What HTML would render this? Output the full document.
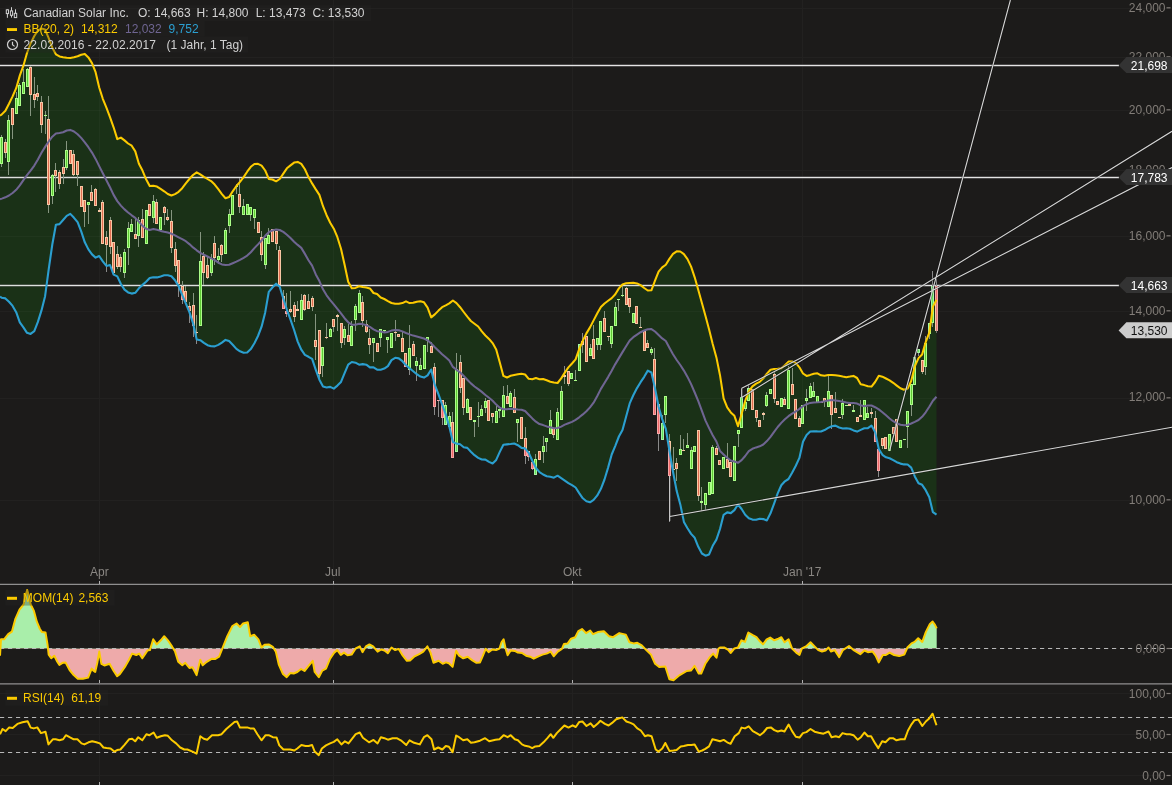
<!DOCTYPE html>
<html lang="de"><head><meta charset="utf-8"><title>Canadian Solar Inc. Chart</title>
<style>html,body{margin:0;padding:0;background:#1c1b1a;overflow:hidden}svg{display:block;will-change:transform}text{opacity:.999}</style></head>
<body>
<svg width="1172" height="785" viewBox="0 0 1172 785" font-family="'Liberation Sans', sans-serif" font-size="12">
<rect width="1172" height="785" fill="#1c1b1a"/>
<path d="M0 500.5H1172M0 398.5H1172M0 311.5H1172M0 236.5H1172M0 170.5H1172M0 110.5H1172M0 57.5H1172M0 8.5H1172M0 693.5H1172M0 734.5H1172M0 775.5H1172M99.5 0V785M333.5 0V785M572.5 0V785M802.5 0V785" stroke="#222120" stroke-width="1" fill="none"/>
<polygon points="0.0,115.7 1.8,114.4 5.4,110.8 9.0,103.8 12.6,96.4 16.2,88.2 19.8,75.6 23.4,65.7 27.0,53.0 30.6,43.5 34.3,36.0 37.9,30.5 41.5,28.6 45.1,29.6 48.7,38.2 52.3,47.7 55.9,54.3 59.5,56.4 63.1,57.2 66.7,57.7 70.3,57.9 74.0,57.3 77.6,56.2 81.2,54.7 84.8,53.9 88.4,57.4 92.0,63.1 95.6,72.2 99.2,87.5 102.8,98.8 106.4,107.7 110.0,117.1 113.6,127.3 117.3,139.1 120.9,137.6 124.5,140.4 128.1,143.5 131.7,145.7 135.3,151.4 138.9,163.8 142.5,170.6 146.1,179.3 149.7,186.1 153.3,185.8 157.0,186.6 160.6,188.9 164.2,191.3 167.8,194.0 171.4,195.5 175.0,194.1 178.6,191.8 182.2,188.2 185.8,183.4 189.4,179.0 193.0,175.0 196.7,172.3 200.3,174.4 203.9,176.8 207.5,179.0 211.1,181.1 214.7,184.6 218.3,189.2 221.9,194.1 225.5,198.2 229.1,197.1 232.7,191.3 236.4,186.0 240.0,181.9 243.6,177.1 247.2,171.7 250.8,166.8 254.4,164.0 258.0,163.8 261.6,165.6 265.2,170.5 268.8,178.9 272.4,179.5 276.1,181.3 279.7,179.0 283.3,173.6 286.9,168.3 290.5,165.4 294.1,162.6 297.7,161.9 301.3,163.9 304.9,169.3 308.5,177.1 312.1,183.4 315.8,189.4 319.4,194.9 323.0,206.2 326.6,215.2 330.2,222.8 333.8,228.7 337.4,237.2 341.0,248.7 344.6,264.8 348.2,281.7 351.8,288.2 355.5,287.9 359.1,286.3 362.7,287.1 366.3,287.5 369.9,288.4 373.5,293.0 377.1,294.1 380.7,297.5 384.3,299.0 387.9,301.1 391.5,303.0 395.2,303.7 398.8,303.7 402.4,303.1 406.0,301.3 409.6,303.1 413.2,302.8 416.8,301.7 420.4,301.3 424.0,302.3 427.6,307.6 431.2,317.4 434.8,314.4 438.5,310.6 442.1,307.2 445.7,305.4 449.3,303.4 452.9,300.5 456.5,303.1 460.1,307.2 463.7,312.0 467.3,316.7 470.9,321.0 474.5,323.7 478.2,326.5 481.8,331.4 485.4,335.5 489.0,338.9 492.6,343.1 496.2,349.4 499.8,362.5 503.4,375.9 507.0,377.5 510.6,375.8 514.2,375.1 517.9,374.3 521.5,373.7 525.1,374.5 528.7,378.8 532.3,379.2 535.9,378.1 539.5,379.2 543.1,379.0 546.7,380.3 550.3,381.7 553.9,382.5 557.6,383.0 561.2,378.4 564.8,372.6 568.4,367.4 572.0,363.5 575.6,359.4 579.2,349.2 582.8,340.6 586.4,333.4 590.0,327.4 593.6,320.4 597.3,313.3 600.9,307.0 604.5,303.5 608.1,300.8 611.7,298.1 615.3,294.3 618.9,288.4 622.5,284.5 626.1,283.3 629.7,282.9 633.3,282.7 637.0,283.4 640.6,285.1 644.2,288.0 647.8,290.5 651.4,290.3 655.0,280.7 658.6,271.7 662.2,267.4 665.8,264.7 669.4,258.9 673.0,253.9 676.7,251.3 680.3,251.5 683.9,254.1 687.5,259.1 691.1,266.6 694.7,277.3 698.3,290.0 701.9,303.1 705.5,316.0 709.1,329.4 712.7,344.0 716.4,357.4 720.0,375.2 723.6,398.4 727.2,407.4 730.8,412.4 734.4,415.8 738.0,426.2 741.6,414.1 745.2,400.9 748.8,391.4 752.4,386.3 756.1,383.7 759.7,381.9 763.3,378.3 766.9,373.7 770.5,369.8 774.1,369.1 777.7,368.8 781.3,368.2 784.9,365.2 788.5,361.6 792.1,361.4 795.8,362.9 799.4,367.3 803.0,373.5 806.6,375.9 810.2,374.9 813.8,373.7 817.4,373.3 821.0,375.3 824.6,375.8 828.2,375.1 831.8,375.0 835.4,375.2 839.1,375.7 842.7,376.5 846.3,377.2 849.9,376.6 853.5,375.9 857.1,378.0 860.7,384.2 864.3,385.1 867.9,386.3 871.5,386.6 875.1,382.0 878.8,375.8 882.4,376.7 886.0,378.5 889.6,380.3 893.2,382.8 896.8,385.6 900.4,388.3 904.0,389.8 907.6,388.5 911.2,381.0 914.8,366.4 918.5,358.1 922.1,354.5 925.7,342.1 929.3,332.6 932.9,306.6 936.5,299.7 936.5,514.6 932.9,512.2 929.3,497.2 925.7,490.2 922.1,484.8 918.5,483.2 914.8,476.4 911.2,467.6 907.6,464.5 904.0,464.4 900.4,463.6 896.8,462.2 893.2,460.1 889.6,458.2 886.0,457.3 882.4,454.8 878.8,449.0 875.1,431.9 871.5,425.6 867.9,428.2 864.3,428.3 860.7,429.9 857.1,431.6 853.5,430.4 849.9,428.7 846.3,428.3 842.7,428.5 839.1,427.5 835.4,425.6 831.8,426.2 828.2,427.9 824.6,430.1 821.0,431.5 817.4,431.4 813.8,431.2 810.2,431.5 806.6,434.9 803.0,441.8 799.4,457.9 795.8,465.7 792.1,472.8 788.5,479.0 784.9,481.3 781.3,485.3 777.7,493.4 774.1,503.6 770.5,513.3 766.9,520.4 763.3,519.1 759.7,518.8 756.1,519.8 752.4,519.6 748.8,518.3 745.2,514.7 741.6,509.0 738.0,504.5 734.4,510.1 730.8,513.1 727.2,512.4 723.6,514.8 720.0,529.0 716.4,539.6 712.7,545.8 709.1,554.4 705.5,555.7 701.9,553.5 698.3,546.8 694.7,537.8 691.1,533.9 687.5,528.3 683.9,521.9 680.3,504.4 676.7,491.1 673.0,471.7 669.4,450.5 665.8,428.9 662.2,419.1 658.6,406.7 655.0,388.3 651.4,372.5 647.8,370.6 644.2,376.8 640.6,382.2 637.0,388.1 633.3,395.3 629.7,403.4 626.1,416.7 622.5,430.0 618.9,436.5 615.3,445.8 611.7,454.5 608.1,467.6 604.5,479.5 600.9,488.8 597.3,495.4 593.6,499.9 590.0,502.3 586.4,501.3 582.8,498.3 579.2,493.1 575.6,487.5 572.0,485.1 568.4,483.1 564.8,480.6 561.2,478.1 557.6,475.7 553.9,477.7 550.3,476.8 546.7,476.3 543.1,474.5 539.5,472.1 535.9,467.8 532.3,460.7 528.7,452.8 525.1,448.4 521.5,447.9 517.9,445.2 514.2,443.5 510.6,444.0 507.0,444.4 503.4,444.8 499.8,451.9 496.2,459.9 492.6,463.5 489.0,461.9 485.4,459.6 481.8,459.5 478.2,457.9 474.5,455.2 470.9,451.7 467.3,447.9 463.7,447.2 460.1,444.3 456.5,443.6 452.9,442.0 449.3,426.6 445.7,414.3 442.1,404.3 438.5,394.3 434.8,384.9 431.2,369.5 427.6,375.4 424.0,377.6 420.4,376.6 416.8,374.2 413.2,371.3 409.6,368.3 406.0,365.2 402.4,361.2 398.8,358.4 395.2,357.8 391.5,360.1 387.9,366.1 384.3,368.6 380.7,369.7 377.1,369.6 373.5,367.3 369.9,367.4 366.3,364.7 362.7,364.1 359.1,364.7 355.5,362.7 351.8,362.0 348.2,364.6 344.6,373.1 341.0,381.9 337.4,385.6 333.8,388.6 330.2,386.9 326.6,387.5 323.0,386.5 319.4,379.7 315.8,369.8 312.1,358.9 308.5,356.8 304.9,354.9 301.3,349.7 297.7,341.6 294.1,330.0 290.5,319.6 286.9,309.8 283.3,298.5 279.7,286.7 276.1,283.7 272.4,287.5 268.8,291.8 265.2,312.4 261.6,326.7 258.0,336.0 254.4,343.3 250.8,349.1 247.2,352.5 243.6,352.7 240.0,351.3 236.4,348.9 232.7,344.8 229.1,341.1 225.5,339.9 221.9,342.6 218.3,344.9 214.7,346.4 211.1,346.3 207.5,345.2 203.9,342.8 200.3,340.2 196.7,339.4 193.0,323.1 189.4,312.1 185.8,303.4 182.2,294.9 178.6,286.1 175.0,280.3 171.4,276.2 167.8,275.2 164.2,275.3 160.6,276.4 157.0,277.4 153.3,277.2 149.7,278.0 146.1,281.8 142.5,284.9 138.9,288.3 135.3,292.8 131.7,293.6 128.1,292.4 124.5,289.6 120.9,284.0 117.3,276.4 113.6,274.6 110.0,265.0 106.4,265.9 102.8,261.3 99.2,256.0 95.6,257.6 92.0,254.4 88.4,249.4 84.8,242.3 81.2,231.3 77.6,222.2 74.0,217.8 70.3,213.9 66.7,215.9 63.1,220.0 59.5,224.1 55.9,224.7 52.3,244.5 48.7,269.4 45.1,296.2 41.5,310.4 37.9,321.9 34.3,331.2 30.6,333.9 27.0,332.8 23.4,327.3 19.8,322.3 16.2,312.2 12.6,305.9 9.0,301.8 5.4,298.4 1.8,297.8 0.0,296.5" fill="#1a3117"/>
<path d="M0 500.5H1172M0 398.5H1172M0 311.5H1172M0 236.5H1172M0 170.5H1172M0 110.5H1172M0 57.5H1172M0 8.5H1172M0 693.5H1172M0 734.5H1172M0 775.5H1172M99.5 0V785M333.5 0V785M572.5 0V785M802.5 0V785" stroke="#fff" stroke-opacity=".028" stroke-width="1" fill="none" clip-path="url(#inb)"/>
<clipPath id="inb"><polygon points="0.0,115.7 1.8,114.4 5.4,110.8 9.0,103.8 12.6,96.4 16.2,88.2 19.8,75.6 23.4,65.7 27.0,53.0 30.6,43.5 34.3,36.0 37.9,30.5 41.5,28.6 45.1,29.6 48.7,38.2 52.3,47.7 55.9,54.3 59.5,56.4 63.1,57.2 66.7,57.7 70.3,57.9 74.0,57.3 77.6,56.2 81.2,54.7 84.8,53.9 88.4,57.4 92.0,63.1 95.6,72.2 99.2,87.5 102.8,98.8 106.4,107.7 110.0,117.1 113.6,127.3 117.3,139.1 120.9,137.6 124.5,140.4 128.1,143.5 131.7,145.7 135.3,151.4 138.9,163.8 142.5,170.6 146.1,179.3 149.7,186.1 153.3,185.8 157.0,186.6 160.6,188.9 164.2,191.3 167.8,194.0 171.4,195.5 175.0,194.1 178.6,191.8 182.2,188.2 185.8,183.4 189.4,179.0 193.0,175.0 196.7,172.3 200.3,174.4 203.9,176.8 207.5,179.0 211.1,181.1 214.7,184.6 218.3,189.2 221.9,194.1 225.5,198.2 229.1,197.1 232.7,191.3 236.4,186.0 240.0,181.9 243.6,177.1 247.2,171.7 250.8,166.8 254.4,164.0 258.0,163.8 261.6,165.6 265.2,170.5 268.8,178.9 272.4,179.5 276.1,181.3 279.7,179.0 283.3,173.6 286.9,168.3 290.5,165.4 294.1,162.6 297.7,161.9 301.3,163.9 304.9,169.3 308.5,177.1 312.1,183.4 315.8,189.4 319.4,194.9 323.0,206.2 326.6,215.2 330.2,222.8 333.8,228.7 337.4,237.2 341.0,248.7 344.6,264.8 348.2,281.7 351.8,288.2 355.5,287.9 359.1,286.3 362.7,287.1 366.3,287.5 369.9,288.4 373.5,293.0 377.1,294.1 380.7,297.5 384.3,299.0 387.9,301.1 391.5,303.0 395.2,303.7 398.8,303.7 402.4,303.1 406.0,301.3 409.6,303.1 413.2,302.8 416.8,301.7 420.4,301.3 424.0,302.3 427.6,307.6 431.2,317.4 434.8,314.4 438.5,310.6 442.1,307.2 445.7,305.4 449.3,303.4 452.9,300.5 456.5,303.1 460.1,307.2 463.7,312.0 467.3,316.7 470.9,321.0 474.5,323.7 478.2,326.5 481.8,331.4 485.4,335.5 489.0,338.9 492.6,343.1 496.2,349.4 499.8,362.5 503.4,375.9 507.0,377.5 510.6,375.8 514.2,375.1 517.9,374.3 521.5,373.7 525.1,374.5 528.7,378.8 532.3,379.2 535.9,378.1 539.5,379.2 543.1,379.0 546.7,380.3 550.3,381.7 553.9,382.5 557.6,383.0 561.2,378.4 564.8,372.6 568.4,367.4 572.0,363.5 575.6,359.4 579.2,349.2 582.8,340.6 586.4,333.4 590.0,327.4 593.6,320.4 597.3,313.3 600.9,307.0 604.5,303.5 608.1,300.8 611.7,298.1 615.3,294.3 618.9,288.4 622.5,284.5 626.1,283.3 629.7,282.9 633.3,282.7 637.0,283.4 640.6,285.1 644.2,288.0 647.8,290.5 651.4,290.3 655.0,280.7 658.6,271.7 662.2,267.4 665.8,264.7 669.4,258.9 673.0,253.9 676.7,251.3 680.3,251.5 683.9,254.1 687.5,259.1 691.1,266.6 694.7,277.3 698.3,290.0 701.9,303.1 705.5,316.0 709.1,329.4 712.7,344.0 716.4,357.4 720.0,375.2 723.6,398.4 727.2,407.4 730.8,412.4 734.4,415.8 738.0,426.2 741.6,414.1 745.2,400.9 748.8,391.4 752.4,386.3 756.1,383.7 759.7,381.9 763.3,378.3 766.9,373.7 770.5,369.8 774.1,369.1 777.7,368.8 781.3,368.2 784.9,365.2 788.5,361.6 792.1,361.4 795.8,362.9 799.4,367.3 803.0,373.5 806.6,375.9 810.2,374.9 813.8,373.7 817.4,373.3 821.0,375.3 824.6,375.8 828.2,375.1 831.8,375.0 835.4,375.2 839.1,375.7 842.7,376.5 846.3,377.2 849.9,376.6 853.5,375.9 857.1,378.0 860.7,384.2 864.3,385.1 867.9,386.3 871.5,386.6 875.1,382.0 878.8,375.8 882.4,376.7 886.0,378.5 889.6,380.3 893.2,382.8 896.8,385.6 900.4,388.3 904.0,389.8 907.6,388.5 911.2,381.0 914.8,366.4 918.5,358.1 922.1,354.5 925.7,342.1 929.3,332.6 932.9,306.6 936.5,299.7 936.5,514.6 932.9,512.2 929.3,497.2 925.7,490.2 922.1,484.8 918.5,483.2 914.8,476.4 911.2,467.6 907.6,464.5 904.0,464.4 900.4,463.6 896.8,462.2 893.2,460.1 889.6,458.2 886.0,457.3 882.4,454.8 878.8,449.0 875.1,431.9 871.5,425.6 867.9,428.2 864.3,428.3 860.7,429.9 857.1,431.6 853.5,430.4 849.9,428.7 846.3,428.3 842.7,428.5 839.1,427.5 835.4,425.6 831.8,426.2 828.2,427.9 824.6,430.1 821.0,431.5 817.4,431.4 813.8,431.2 810.2,431.5 806.6,434.9 803.0,441.8 799.4,457.9 795.8,465.7 792.1,472.8 788.5,479.0 784.9,481.3 781.3,485.3 777.7,493.4 774.1,503.6 770.5,513.3 766.9,520.4 763.3,519.1 759.7,518.8 756.1,519.8 752.4,519.6 748.8,518.3 745.2,514.7 741.6,509.0 738.0,504.5 734.4,510.1 730.8,513.1 727.2,512.4 723.6,514.8 720.0,529.0 716.4,539.6 712.7,545.8 709.1,554.4 705.5,555.7 701.9,553.5 698.3,546.8 694.7,537.8 691.1,533.9 687.5,528.3 683.9,521.9 680.3,504.4 676.7,491.1 673.0,471.7 669.4,450.5 665.8,428.9 662.2,419.1 658.6,406.7 655.0,388.3 651.4,372.5 647.8,370.6 644.2,376.8 640.6,382.2 637.0,388.1 633.3,395.3 629.7,403.4 626.1,416.7 622.5,430.0 618.9,436.5 615.3,445.8 611.7,454.5 608.1,467.6 604.5,479.5 600.9,488.8 597.3,495.4 593.6,499.9 590.0,502.3 586.4,501.3 582.8,498.3 579.2,493.1 575.6,487.5 572.0,485.1 568.4,483.1 564.8,480.6 561.2,478.1 557.6,475.7 553.9,477.7 550.3,476.8 546.7,476.3 543.1,474.5 539.5,472.1 535.9,467.8 532.3,460.7 528.7,452.8 525.1,448.4 521.5,447.9 517.9,445.2 514.2,443.5 510.6,444.0 507.0,444.4 503.4,444.8 499.8,451.9 496.2,459.9 492.6,463.5 489.0,461.9 485.4,459.6 481.8,459.5 478.2,457.9 474.5,455.2 470.9,451.7 467.3,447.9 463.7,447.2 460.1,444.3 456.5,443.6 452.9,442.0 449.3,426.6 445.7,414.3 442.1,404.3 438.5,394.3 434.8,384.9 431.2,369.5 427.6,375.4 424.0,377.6 420.4,376.6 416.8,374.2 413.2,371.3 409.6,368.3 406.0,365.2 402.4,361.2 398.8,358.4 395.2,357.8 391.5,360.1 387.9,366.1 384.3,368.6 380.7,369.7 377.1,369.6 373.5,367.3 369.9,367.4 366.3,364.7 362.7,364.1 359.1,364.7 355.5,362.7 351.8,362.0 348.2,364.6 344.6,373.1 341.0,381.9 337.4,385.6 333.8,388.6 330.2,386.9 326.6,387.5 323.0,386.5 319.4,379.7 315.8,369.8 312.1,358.9 308.5,356.8 304.9,354.9 301.3,349.7 297.7,341.6 294.1,330.0 290.5,319.6 286.9,309.8 283.3,298.5 279.7,286.7 276.1,283.7 272.4,287.5 268.8,291.8 265.2,312.4 261.6,326.7 258.0,336.0 254.4,343.3 250.8,349.1 247.2,352.5 243.6,352.7 240.0,351.3 236.4,348.9 232.7,344.8 229.1,341.1 225.5,339.9 221.9,342.6 218.3,344.9 214.7,346.4 211.1,346.3 207.5,345.2 203.9,342.8 200.3,340.2 196.7,339.4 193.0,323.1 189.4,312.1 185.8,303.4 182.2,294.9 178.6,286.1 175.0,280.3 171.4,276.2 167.8,275.2 164.2,275.3 160.6,276.4 157.0,277.4 153.3,277.2 149.7,278.0 146.1,281.8 142.5,284.9 138.9,288.3 135.3,292.8 131.7,293.6 128.1,292.4 124.5,289.6 120.9,284.0 117.3,276.4 113.6,274.6 110.0,265.0 106.4,265.9 102.8,261.3 99.2,256.0 95.6,257.6 92.0,254.4 88.4,249.4 84.8,242.3 81.2,231.3 77.6,222.2 74.0,217.8 70.3,213.9 66.7,215.9 63.1,220.0 59.5,224.1 55.9,224.7 52.3,244.5 48.7,269.4 45.1,296.2 41.5,310.4 37.9,321.9 34.3,331.2 30.6,333.9 27.0,332.8 23.4,327.3 19.8,322.3 16.2,312.2 12.6,305.9 9.0,301.8 5.4,298.4 1.8,297.8 0.0,296.5"/></clipPath>
<clipPath id="outb"><path clip-rule="evenodd" d="M0 0H1172V584H0Z M0.0 115.7 L1.8 114.4 L5.4 110.8 L9.0 103.8 L12.6 96.4 L16.2 88.2 L19.8 75.6 L23.4 65.7 L27.0 53.0 L30.6 43.5 L34.3 36.0 L37.9 30.5 L41.5 28.6 L45.1 29.6 L48.7 38.2 L52.3 47.7 L55.9 54.3 L59.5 56.4 L63.1 57.2 L66.7 57.7 L70.3 57.9 L74.0 57.3 L77.6 56.2 L81.2 54.7 L84.8 53.9 L88.4 57.4 L92.0 63.1 L95.6 72.2 L99.2 87.5 L102.8 98.8 L106.4 107.7 L110.0 117.1 L113.6 127.3 L117.3 139.1 L120.9 137.6 L124.5 140.4 L128.1 143.5 L131.7 145.7 L135.3 151.4 L138.9 163.8 L142.5 170.6 L146.1 179.3 L149.7 186.1 L153.3 185.8 L157.0 186.6 L160.6 188.9 L164.2 191.3 L167.8 194.0 L171.4 195.5 L175.0 194.1 L178.6 191.8 L182.2 188.2 L185.8 183.4 L189.4 179.0 L193.0 175.0 L196.7 172.3 L200.3 174.4 L203.9 176.8 L207.5 179.0 L211.1 181.1 L214.7 184.6 L218.3 189.2 L221.9 194.1 L225.5 198.2 L229.1 197.1 L232.7 191.3 L236.4 186.0 L240.0 181.9 L243.6 177.1 L247.2 171.7 L250.8 166.8 L254.4 164.0 L258.0 163.8 L261.6 165.6 L265.2 170.5 L268.8 178.9 L272.4 179.5 L276.1 181.3 L279.7 179.0 L283.3 173.6 L286.9 168.3 L290.5 165.4 L294.1 162.6 L297.7 161.9 L301.3 163.9 L304.9 169.3 L308.5 177.1 L312.1 183.4 L315.8 189.4 L319.4 194.9 L323.0 206.2 L326.6 215.2 L330.2 222.8 L333.8 228.7 L337.4 237.2 L341.0 248.7 L344.6 264.8 L348.2 281.7 L351.8 288.2 L355.5 287.9 L359.1 286.3 L362.7 287.1 L366.3 287.5 L369.9 288.4 L373.5 293.0 L377.1 294.1 L380.7 297.5 L384.3 299.0 L387.9 301.1 L391.5 303.0 L395.2 303.7 L398.8 303.7 L402.4 303.1 L406.0 301.3 L409.6 303.1 L413.2 302.8 L416.8 301.7 L420.4 301.3 L424.0 302.3 L427.6 307.6 L431.2 317.4 L434.8 314.4 L438.5 310.6 L442.1 307.2 L445.7 305.4 L449.3 303.4 L452.9 300.5 L456.5 303.1 L460.1 307.2 L463.7 312.0 L467.3 316.7 L470.9 321.0 L474.5 323.7 L478.2 326.5 L481.8 331.4 L485.4 335.5 L489.0 338.9 L492.6 343.1 L496.2 349.4 L499.8 362.5 L503.4 375.9 L507.0 377.5 L510.6 375.8 L514.2 375.1 L517.9 374.3 L521.5 373.7 L525.1 374.5 L528.7 378.8 L532.3 379.2 L535.9 378.1 L539.5 379.2 L543.1 379.0 L546.7 380.3 L550.3 381.7 L553.9 382.5 L557.6 383.0 L561.2 378.4 L564.8 372.6 L568.4 367.4 L572.0 363.5 L575.6 359.4 L579.2 349.2 L582.8 340.6 L586.4 333.4 L590.0 327.4 L593.6 320.4 L597.3 313.3 L600.9 307.0 L604.5 303.5 L608.1 300.8 L611.7 298.1 L615.3 294.3 L618.9 288.4 L622.5 284.5 L626.1 283.3 L629.7 282.9 L633.3 282.7 L637.0 283.4 L640.6 285.1 L644.2 288.0 L647.8 290.5 L651.4 290.3 L655.0 280.7 L658.6 271.7 L662.2 267.4 L665.8 264.7 L669.4 258.9 L673.0 253.9 L676.7 251.3 L680.3 251.5 L683.9 254.1 L687.5 259.1 L691.1 266.6 L694.7 277.3 L698.3 290.0 L701.9 303.1 L705.5 316.0 L709.1 329.4 L712.7 344.0 L716.4 357.4 L720.0 375.2 L723.6 398.4 L727.2 407.4 L730.8 412.4 L734.4 415.8 L738.0 426.2 L741.6 414.1 L745.2 400.9 L748.8 391.4 L752.4 386.3 L756.1 383.7 L759.7 381.9 L763.3 378.3 L766.9 373.7 L770.5 369.8 L774.1 369.1 L777.7 368.8 L781.3 368.2 L784.9 365.2 L788.5 361.6 L792.1 361.4 L795.8 362.9 L799.4 367.3 L803.0 373.5 L806.6 375.9 L810.2 374.9 L813.8 373.7 L817.4 373.3 L821.0 375.3 L824.6 375.8 L828.2 375.1 L831.8 375.0 L835.4 375.2 L839.1 375.7 L842.7 376.5 L846.3 377.2 L849.9 376.6 L853.5 375.9 L857.1 378.0 L860.7 384.2 L864.3 385.1 L867.9 386.3 L871.5 386.6 L875.1 382.0 L878.8 375.8 L882.4 376.7 L886.0 378.5 L889.6 380.3 L893.2 382.8 L896.8 385.6 L900.4 388.3 L904.0 389.8 L907.6 388.5 L911.2 381.0 L914.8 366.4 L918.5 358.1 L922.1 354.5 L925.7 342.1 L929.3 332.6 L932.9 306.6 L936.5 299.7 L936.5 514.6 L932.9 512.2 L929.3 497.2 L925.7 490.2 L922.1 484.8 L918.5 483.2 L914.8 476.4 L911.2 467.6 L907.6 464.5 L904.0 464.4 L900.4 463.6 L896.8 462.2 L893.2 460.1 L889.6 458.2 L886.0 457.3 L882.4 454.8 L878.8 449.0 L875.1 431.9 L871.5 425.6 L867.9 428.2 L864.3 428.3 L860.7 429.9 L857.1 431.6 L853.5 430.4 L849.9 428.7 L846.3 428.3 L842.7 428.5 L839.1 427.5 L835.4 425.6 L831.8 426.2 L828.2 427.9 L824.6 430.1 L821.0 431.5 L817.4 431.4 L813.8 431.2 L810.2 431.5 L806.6 434.9 L803.0 441.8 L799.4 457.9 L795.8 465.7 L792.1 472.8 L788.5 479.0 L784.9 481.3 L781.3 485.3 L777.7 493.4 L774.1 503.6 L770.5 513.3 L766.9 520.4 L763.3 519.1 L759.7 518.8 L756.1 519.8 L752.4 519.6 L748.8 518.3 L745.2 514.7 L741.6 509.0 L738.0 504.5 L734.4 510.1 L730.8 513.1 L727.2 512.4 L723.6 514.8 L720.0 529.0 L716.4 539.6 L712.7 545.8 L709.1 554.4 L705.5 555.7 L701.9 553.5 L698.3 546.8 L694.7 537.8 L691.1 533.9 L687.5 528.3 L683.9 521.9 L680.3 504.4 L676.7 491.1 L673.0 471.7 L669.4 450.5 L665.8 428.9 L662.2 419.1 L658.6 406.7 L655.0 388.3 L651.4 372.5 L647.8 370.6 L644.2 376.8 L640.6 382.2 L637.0 388.1 L633.3 395.3 L629.7 403.4 L626.1 416.7 L622.5 430.0 L618.9 436.5 L615.3 445.8 L611.7 454.5 L608.1 467.6 L604.5 479.5 L600.9 488.8 L597.3 495.4 L593.6 499.9 L590.0 502.3 L586.4 501.3 L582.8 498.3 L579.2 493.1 L575.6 487.5 L572.0 485.1 L568.4 483.1 L564.8 480.6 L561.2 478.1 L557.6 475.7 L553.9 477.7 L550.3 476.8 L546.7 476.3 L543.1 474.5 L539.5 472.1 L535.9 467.8 L532.3 460.7 L528.7 452.8 L525.1 448.4 L521.5 447.9 L517.9 445.2 L514.2 443.5 L510.6 444.0 L507.0 444.4 L503.4 444.8 L499.8 451.9 L496.2 459.9 L492.6 463.5 L489.0 461.9 L485.4 459.6 L481.8 459.5 L478.2 457.9 L474.5 455.2 L470.9 451.7 L467.3 447.9 L463.7 447.2 L460.1 444.3 L456.5 443.6 L452.9 442.0 L449.3 426.6 L445.7 414.3 L442.1 404.3 L438.5 394.3 L434.8 384.9 L431.2 369.5 L427.6 375.4 L424.0 377.6 L420.4 376.6 L416.8 374.2 L413.2 371.3 L409.6 368.3 L406.0 365.2 L402.4 361.2 L398.8 358.4 L395.2 357.8 L391.5 360.1 L387.9 366.1 L384.3 368.6 L380.7 369.7 L377.1 369.6 L373.5 367.3 L369.9 367.4 L366.3 364.7 L362.7 364.1 L359.1 364.7 L355.5 362.7 L351.8 362.0 L348.2 364.6 L344.6 373.1 L341.0 381.9 L337.4 385.6 L333.8 388.6 L330.2 386.9 L326.6 387.5 L323.0 386.5 L319.4 379.7 L315.8 369.8 L312.1 358.9 L308.5 356.8 L304.9 354.9 L301.3 349.7 L297.7 341.6 L294.1 330.0 L290.5 319.6 L286.9 309.8 L283.3 298.5 L279.7 286.7 L276.1 283.7 L272.4 287.5 L268.8 291.8 L265.2 312.4 L261.6 326.7 L258.0 336.0 L254.4 343.3 L250.8 349.1 L247.2 352.5 L243.6 352.7 L240.0 351.3 L236.4 348.9 L232.7 344.8 L229.1 341.1 L225.5 339.9 L221.9 342.6 L218.3 344.9 L214.7 346.4 L211.1 346.3 L207.5 345.2 L203.9 342.8 L200.3 340.2 L196.7 339.4 L193.0 323.1 L189.4 312.1 L185.8 303.4 L182.2 294.9 L178.6 286.1 L175.0 280.3 L171.4 276.2 L167.8 275.2 L164.2 275.3 L160.6 276.4 L157.0 277.4 L153.3 277.2 L149.7 278.0 L146.1 281.8 L142.5 284.9 L138.9 288.3 L135.3 292.8 L131.7 293.6 L128.1 292.4 L124.5 289.6 L120.9 284.0 L117.3 276.4 L113.6 274.6 L110.0 265.0 L106.4 265.9 L102.8 261.3 L99.2 256.0 L95.6 257.6 L92.0 254.4 L88.4 249.4 L84.8 242.3 L81.2 231.3 L77.6 222.2 L74.0 217.8 L70.3 213.9 L66.7 215.9 L63.1 220.0 L59.5 224.1 L55.9 224.7 L52.3 244.5 L48.7 269.4 L45.1 296.2 L41.5 310.4 L37.9 321.9 L34.3 331.2 L30.6 333.9 L27.0 332.8 L23.4 327.3 L19.8 322.3 L16.2 312.2 L12.6 305.9 L9.0 301.8 L5.4 298.4 L1.8 297.8 L0.0 296.5 Z"/></clipPath>
<path d="M0 65.5H1119M0 177.5H1119M0 285.5H1119" stroke="#0c0c0c" stroke-opacity=".35" stroke-width="2.8"/>
<path d="M0 65.5H1119M0 177.5H1119M0 285.5H1119" stroke="#e4e4e4" stroke-width="1.35" clip-path="url(#outb)"/>
<path d="M0 65.5H1119M0 177.5H1119M0 285.5H1119" stroke="#dce0dc" stroke-width="1.35" clip-path="url(#inb)"/>
<g clip-path="url(#inb)">
<path d="M1.5 135V137M1.5 164V167M5.5 139V142M5.5 153V158M8.5 115V120M8.5 162V175M12.5 125V139M16.5 92V98M19.5 83V85M23.5 69V82M27.5 68V69M30.5 66V67M30.5 95V116M34.5 77V94M34.5 100V108M37.5 85V93M37.5 97V101M41.5 96V102M41.5 125V133M45.5 111V115M45.5 116V134M48.5 96V119M48.5 205V213M52.5 174V175M52.5 196V204M55.5 163V170M55.5 176V192M59.5 170V172M59.5 184V189M63.5 159V167M63.5 174V184M66.5 141V150M66.5 168V170M73.5 150V154M73.5 175V176M77.5 175V186M84.5 212V227M88.5 205V224M91.5 185V192M95.5 188V189M99.5 208V210M102.5 200V202M106.5 231V237M106.5 245V272M110.5 217V220M110.5 247V254M117.5 246V254M117.5 267V269M120.5 254V257M120.5 267V272M124.5 249V252M124.5 273V278M128.5 222V228M128.5 248V265M131.5 219V224M135.5 218V234M138.5 217V220M138.5 236V247M142.5 209V219M153.5 195V201M153.5 218V223M156.5 199V202M164.5 206V207M164.5 213V225M167.5 209V217M167.5 220V221M171.5 210V221M171.5 248V253M175.5 242V249M175.5 266V272M178.5 284V297M182.5 281V286M182.5 300V304M185.5 286V291M189.5 302V306M189.5 311V323M193.5 293V305M193.5 326V337M196.5 315V332M196.5 333V344M200.5 232V261M203.5 252V256M203.5 273V285M207.5 256V265M207.5 278V279M211.5 254V259M211.5 273V276M214.5 236V243M214.5 258V265M218.5 248V256M218.5 260V264M221.5 244V245M221.5 255V262M225.5 228V230M229.5 209V214M229.5 226V233M236.5 184V186M236.5 187V194M239.5 178V194M239.5 207V213M243.5 199V206M250.5 215V221M254.5 218V229M261.5 231V237M261.5 255V261M265.5 265V269M268.5 228V235M276.5 244V250M279.5 246V250M283.5 290V296M286.5 293V311M286.5 314V317M290.5 291V309M290.5 312V313M294.5 302V305M294.5 317V322M297.5 301V309M301.5 294V300M304.5 294V295M304.5 310V311M308.5 294V301M312.5 296V298M312.5 307V311M315.5 314V340M315.5 347V360M319.5 374V378M322.5 366V377M326.5 323V337M326.5 338V339M330.5 328V329M333.5 327V332M337.5 314V315M337.5 317V331M341.5 343V348M344.5 326V329M344.5 338V345M348.5 324V335M351.5 321V326M355.5 304V306M355.5 320V331M359.5 290V293M362.5 296V302M362.5 321V327M366.5 320V324M366.5 332V333M369.5 329V338M369.5 345V354M373.5 343V362M380.5 338V347M384.5 331V333M387.5 340V353M395.5 320V332M395.5 333V341M402.5 332V338M409.5 325V348M409.5 370V375M413.5 341V344M416.5 357V361M416.5 366V381M420.5 358V365M427.5 341V352M431.5 342V346M434.5 363V367M434.5 407V415M438.5 401V417M442.5 418V425M445.5 402V405M449.5 412V416M452.5 412V422M456.5 353V369M460.5 355V362M460.5 388V393M463.5 408V415M467.5 398V399M474.5 422V437M478.5 402V416M478.5 417V427M481.5 405V409M485.5 398V401M485.5 408V413M492.5 417V423M496.5 406V411M499.5 411V418M503.5 386V395M507.5 385V396M510.5 391V393M514.5 389V397M517.5 423V442M525.5 427V438M525.5 456V464M528.5 457V461M532.5 469V470M535.5 454V459M543.5 436V446M543.5 452V463M546.5 442V452M550.5 410V420M553.5 435V438M557.5 408V412M561.5 386V391M564.5 366V375M564.5 377V384M568.5 384V386M575.5 370V380M582.5 333V341M582.5 345V353M590.5 344V348M593.5 325V339M597.5 345V350M600.5 345V350M604.5 311V318M608.5 337V341M611.5 344V348M615.5 302V307M618.5 300V311M622.5 286V295M622.5 296V297M626.5 287V288M629.5 307V313M640.5 317V327M647.5 340V343M651.5 347V349M651.5 353V355M654.5 348V359M658.5 434V451M662.5 415V423M665.5 415V423M669.5 434V441M669.5 476V522M673.5 447V469M676.5 458V463M676.5 469V481M680.5 435V449M683.5 439V450M687.5 433V445M691.5 447V450M698.5 496V501M701.5 487V501M701.5 503V511M705.5 505V510M712.5 445V447M716.5 446V448M727.5 443V459M738.5 434V447M745.5 409V411M748.5 385V388M756.5 418V422M763.5 412V413M763.5 415V420M766.5 392V395M766.5 406V407M774.5 371V374M774.5 399V403M784.5 397V399M788.5 366V370M792.5 368V384M799.5 416V418M806.5 389V398M806.5 401V411M810.5 383V386M813.5 382V391M824.5 402V407M828.5 376V391M831.5 415V429M835.5 392V408M842.5 399V403M842.5 415V419M853.5 405V410M860.5 400V415M867.5 407V413M871.5 408V412M871.5 414V418M875.5 411V418M878.5 471V477M882.5 446V449M907.5 427V448M911.5 405V416M918.5 353V356M922.5 372V374M925.5 336V343M925.5 367V375M929.5 334V339M932.5 271V286M932.5 323V327M936.5 279V286M936.5 331V333" stroke="#869580" stroke-width="1" fill="none"/>
<path d="M0 137h3v27h-3zM7 120h3v42h-3zM15 98h3v16h-3zM18 85h3v21h-3zM22 82h3v12h-3zM26 69h3v18h-3zM44 115h3v1h-3zM51 175h3v21h-3zM65 150h3v18h-3zM87 202h3v3h-3zM123 252h3v21h-3zM127 228h3v20h-3zM130 224h3v8h-3zM137 220h3v16h-3zM145 210h3v34h-3zM152 201h3v17h-3zM159 217h3v13h-3zM199 261h3v65h-3zM210 259h3v14h-3zM217 256h3v4h-3zM224 230h3v24h-3zM228 214h3v12h-3zM231 195h3v20h-3zM235 186h3v1h-3zM242 206h3v9h-3zM246 204h3v11h-3zM249 207h3v8h-3zM253 209h3v9h-3zM264 238h3v27h-3zM267 235h3v9h-3zM300 300h3v20h-3zM321 347h3v19h-3zM329 329h3v8h-3zM343 329h3v9h-3zM350 326h3v20h-3zM354 306h3v14h-3zM358 293h3v20h-3zM372 338h3v5h-3zM379 329h3v9h-3zM383 330h3v1h-3zM386 337h3v3h-3zM390 333h3v15h-3zM408 348h3v22h-3zM415 361h3v5h-3zM419 365h3v5h-3zM423 345h3v24h-3zM426 337h3v4h-3zM444 405h3v20h-3zM448 416h3v11h-3zM455 369h3v83h-3zM466 399h3v14h-3zM473 420h3v2h-3zM477 416h3v1h-3zM480 409h3v7h-3zM484 401h3v7h-3zM495 411h3v12h-3zM498 409h3v2h-3zM502 395h3v22h-3zM509 393h3v14h-3zM516 419h3v4h-3zM534 459h3v16h-3zM542 446h3v6h-3zM545 438h3v4h-3zM549 420h3v14h-3zM556 412h3v28h-3zM560 391h3v29h-3zM570 373h3v6h-3zM574 380h3v1h-3zM578 344h3v27h-3zM589 348h3v8h-3zM596 338h3v7h-3zM599 321h3v24h-3zM610 326h3v18h-3zM614 307h3v19h-3zM617 299h3v1h-3zM621 295h3v1h-3zM632 313h3v10h-3zM650 349h3v4h-3zM661 423h3v17h-3zM664 396h3v19h-3zM679 449h3v6h-3zM686 445h3v3h-3zM690 450h3v19h-3zM693 446h3v6h-3zM700 501h3v2h-3zM704 493h3v12h-3zM708 482h3v13h-3zM711 447h3v47h-3zM722 457h3v12h-3zM733 446h3v35h-3zM737 430h3v4h-3zM740 397h3v31h-3zM744 402h3v7h-3zM747 388h3v13h-3zM765 395h3v11h-3zM769 389h3v5h-3zM780 398h3v9h-3zM787 370h3v39h-3zM801 405h3v19h-3zM805 398h3v3h-3zM809 386h3v12h-3zM812 391h3v6h-3zM816 396h3v7h-3zM827 391h3v16h-3zM841 403h3v12h-3zM845 405h3v1h-3zM852 410h3v2h-3zM863 400h3v20h-3zM866 413h3v5h-3zM888 434h3v17h-3zM899 440h3v8h-3zM903 439h3v1h-3zM906 411h3v16h-3zM910 384h3v21h-3zM913 357h3v28h-3zM917 349h3v4h-3zM924 343h3v24h-3zM928 323h3v11h-3zM931 286h3v37h-3z" fill="#acfd89"/>
<path d="M1 138h1v25h-1zM8 121h1v40h-1zM16 99h1v14h-1zM19 86h1v19h-1zM23 83h1v10h-1zM27 70h1v16h-1zM52 176h1v19h-1zM66 151h1v16h-1zM88 203h1v1h-1zM124 253h1v19h-1zM128 229h1v18h-1zM131 225h1v6h-1zM138 221h1v14h-1zM146 211h1v32h-1zM153 202h1v15h-1zM160 218h1v11h-1zM200 262h1v63h-1zM211 260h1v12h-1zM218 257h1v2h-1zM225 231h1v22h-1zM229 215h1v10h-1zM232 196h1v18h-1zM243 207h1v7h-1zM247 205h1v9h-1zM250 208h1v6h-1zM254 210h1v7h-1zM265 239h1v25h-1zM268 236h1v7h-1zM301 301h1v18h-1zM322 348h1v17h-1zM330 330h1v6h-1zM344 330h1v7h-1zM351 327h1v18h-1zM355 307h1v12h-1zM359 294h1v18h-1zM373 339h1v3h-1zM380 330h1v7h-1zM387 338h1v1h-1zM391 334h1v13h-1zM409 349h1v20h-1zM416 362h1v3h-1zM420 366h1v3h-1zM424 346h1v22h-1zM427 338h1v2h-1zM445 406h1v18h-1zM449 417h1v9h-1zM456 370h1v81h-1zM467 400h1v12h-1zM481 410h1v5h-1zM485 402h1v5h-1zM496 412h1v10h-1zM503 396h1v20h-1zM510 394h1v12h-1zM517 420h1v2h-1zM535 460h1v14h-1zM543 447h1v4h-1zM546 439h1v2h-1zM550 421h1v12h-1zM557 413h1v26h-1zM561 392h1v27h-1zM571 374h1v4h-1zM579 345h1v25h-1zM590 349h1v6h-1zM597 339h1v5h-1zM600 322h1v22h-1zM611 327h1v16h-1zM615 308h1v17h-1zM633 314h1v8h-1zM651 350h1v2h-1zM662 424h1v15h-1zM665 397h1v17h-1zM680 450h1v4h-1zM687 446h1v1h-1zM691 451h1v17h-1zM694 447h1v4h-1zM705 494h1v10h-1zM709 483h1v11h-1zM712 448h1v45h-1zM723 458h1v10h-1zM734 447h1v33h-1zM738 431h1v2h-1zM741 398h1v29h-1zM745 403h1v5h-1zM748 389h1v11h-1zM766 396h1v9h-1zM770 390h1v3h-1zM781 399h1v7h-1zM788 371h1v37h-1zM802 406h1v17h-1zM806 399h1v1h-1zM810 387h1v10h-1zM813 392h1v4h-1zM817 397h1v5h-1zM828 392h1v14h-1zM842 404h1v10h-1zM864 401h1v18h-1zM867 414h1v3h-1zM889 435h1v15h-1zM900 441h1v6h-1zM907 412h1v14h-1zM911 385h1v19h-1zM914 358h1v26h-1zM918 350h1v2h-1zM925 344h1v22h-1zM929 324h1v9h-1zM932 287h1v35h-1z" fill="#5ecb34"/>
<path d="M4 142h3v11h-3zM11 108h3v17h-3zM29 67h3v28h-3zM33 94h3v6h-3zM36 93h3v4h-3zM40 102h3v23h-3zM47 119h3v86h-3zM54 170h3v6h-3zM58 172h3v12h-3zM62 167h3v7h-3zM69 150h3v14h-3zM72 154h3v21h-3zM76 161h3v14h-3zM80 186h3v21h-3zM83 200h3v12h-3zM90 192h3v9h-3zM94 189h3v17h-3zM98 210h3v2h-3zM101 202h3v42h-3zM105 237h3v8h-3zM109 220h3v27h-3zM112 242h3v31h-3zM116 254h3v13h-3zM119 257h3v10h-3zM134 234h3v5h-3zM141 219h3v19h-3zM148 204h3v12h-3zM155 202h3v22h-3zM163 207h3v6h-3zM166 217h3v3h-3zM170 221h3v27h-3zM174 249h3v17h-3zM177 260h3v24h-3zM181 286h3v14h-3zM184 291h3v11h-3zM188 306h3v5h-3zM192 305h3v21h-3zM195 332h3v1h-3zM202 256h3v17h-3zM206 265h3v13h-3zM213 243h3v15h-3zM220 245h3v10h-3zM238 194h3v13h-3zM257 222h3v11h-3zM260 237h3v18h-3zM271 229h3v13h-3zM275 231h3v13h-3zM278 250h3v35h-3zM282 296h3v13h-3zM285 311h3v3h-3zM289 309h3v3h-3zM293 305h3v12h-3zM296 309h3v2h-3zM303 295h3v15h-3zM307 301h3v8h-3zM311 298h3v9h-3zM314 340h3v7h-3zM318 330h3v44h-3zM325 337h3v1h-3zM332 319h3v8h-3zM336 315h3v2h-3zM340 323h3v20h-3zM347 335h3v7h-3zM361 302h3v19h-3zM365 324h3v8h-3zM368 338h3v7h-3zM376 343h3v9h-3zM394 332h3v1h-3zM397 334h3v3h-3zM401 338h3v14h-3zM404 353h3v14h-3zM412 344h3v12h-3zM430 346h3v7h-3zM433 367h3v40h-3zM437 400h3v1h-3zM441 400h3v18h-3zM451 422h3v36h-3zM459 362h3v26h-3zM462 378h3v30h-3zM469 407h3v13h-3zM487 400h3v21h-3zM491 413h3v4h-3zM506 396h3v8h-3zM513 397h3v16h-3zM520 417h3v22h-3zM524 438h3v18h-3zM527 451h3v6h-3zM531 462h3v7h-3zM538 451h3v9h-3zM552 428h3v7h-3zM563 375h3v2h-3zM567 371h3v13h-3zM581 341h3v4h-3zM585 336h3v26h-3zM592 339h3v20h-3zM603 318h3v14h-3zM607 336h3v1h-3zM625 288h3v17h-3zM628 298h3v9h-3zM635 306h3v18h-3zM639 327h3v1h-3zM643 331h3v20h-3zM646 343h3v5h-3zM653 359h3v56h-3zM657 404h3v30h-3zM668 441h3v35h-3zM672 469h3v1h-3zM675 463h3v6h-3zM682 450h3v1h-3zM697 430h3v66h-3zM715 448h3v7h-3zM718 460h3v5h-3zM726 459h3v9h-3zM729 462h3v15h-3zM751 389h3v21h-3zM755 410h3v8h-3zM758 420h3v7h-3zM762 413h3v2h-3zM773 374h3v25h-3zM776 401h3v4h-3zM783 399h3v6h-3zM791 384h3v11h-3zM794 399h3v20h-3zM798 418h3v9h-3zM820 402h3v1h-3zM823 398h3v4h-3zM830 395h3v20h-3zM834 408h3v5h-3zM838 417h3v1h-3zM848 404h3v2h-3zM856 417h3v5h-3zM859 415h3v2h-3zM870 412h3v2h-3zM874 418h3v24h-3zM877 449h3v22h-3zM881 438h3v8h-3zM884 437h3v12h-3zM892 427h3v7h-3zM895 419h3v23h-3zM921 360h3v12h-3zM935 286h3v45h-3z" fill="#f8c6a4"/>
<path d="M5 143h1v9h-1zM12 109h1v15h-1zM30 68h1v26h-1zM34 95h1v4h-1zM37 94h1v2h-1zM41 103h1v21h-1zM48 120h1v84h-1zM55 171h1v4h-1zM59 173h1v10h-1zM63 168h1v5h-1zM70 151h1v12h-1zM73 155h1v19h-1zM77 162h1v12h-1zM81 187h1v19h-1zM84 201h1v10h-1zM91 193h1v7h-1zM95 190h1v15h-1zM102 203h1v40h-1zM106 238h1v6h-1zM110 221h1v25h-1zM113 243h1v29h-1zM117 255h1v11h-1zM120 258h1v8h-1zM135 235h1v3h-1zM142 220h1v17h-1zM149 205h1v10h-1zM156 203h1v20h-1zM164 208h1v4h-1zM167 218h1v1h-1zM171 222h1v25h-1zM175 250h1v15h-1zM178 261h1v22h-1zM182 287h1v12h-1zM185 292h1v9h-1zM189 307h1v3h-1zM193 306h1v19h-1zM203 257h1v15h-1zM207 266h1v11h-1zM214 244h1v13h-1zM221 246h1v8h-1zM239 195h1v11h-1zM258 223h1v9h-1zM261 238h1v16h-1zM272 230h1v11h-1zM276 232h1v11h-1zM279 251h1v33h-1zM283 297h1v11h-1zM286 312h1v1h-1zM290 310h1v1h-1zM294 306h1v10h-1zM304 296h1v13h-1zM308 302h1v6h-1zM312 299h1v7h-1zM315 341h1v5h-1zM319 331h1v42h-1zM333 320h1v6h-1zM341 324h1v18h-1zM348 336h1v5h-1zM362 303h1v17h-1zM366 325h1v6h-1zM369 339h1v5h-1zM377 344h1v7h-1zM398 335h1v1h-1zM402 339h1v12h-1zM405 354h1v12h-1zM413 345h1v10h-1zM431 347h1v5h-1zM434 368h1v38h-1zM442 401h1v16h-1zM452 423h1v34h-1zM460 363h1v24h-1zM463 379h1v28h-1zM470 408h1v11h-1zM488 401h1v19h-1zM492 414h1v2h-1zM507 397h1v6h-1zM514 398h1v14h-1zM521 418h1v20h-1zM525 439h1v16h-1zM528 452h1v4h-1zM532 463h1v5h-1zM539 452h1v7h-1zM553 429h1v5h-1zM568 372h1v11h-1zM582 342h1v2h-1zM586 337h1v24h-1zM593 340h1v18h-1zM604 319h1v12h-1zM626 289h1v15h-1zM629 299h1v7h-1zM636 307h1v16h-1zM644 332h1v18h-1zM647 344h1v3h-1zM654 360h1v54h-1zM658 405h1v28h-1zM669 442h1v33h-1zM676 464h1v4h-1zM698 431h1v64h-1zM716 449h1v5h-1zM719 461h1v3h-1zM727 460h1v7h-1zM730 463h1v13h-1zM752 390h1v19h-1zM756 411h1v6h-1zM759 421h1v5h-1zM774 375h1v23h-1zM777 402h1v2h-1zM784 400h1v4h-1zM792 385h1v9h-1zM795 400h1v18h-1zM799 419h1v7h-1zM824 399h1v2h-1zM831 396h1v18h-1zM835 409h1v3h-1zM857 418h1v3h-1zM875 419h1v22h-1zM878 450h1v20h-1zM882 439h1v6h-1zM885 438h1v10h-1zM893 428h1v5h-1zM896 420h1v21h-1zM922 361h1v10h-1zM936 287h1v43h-1z" fill="#e26e50"/>
</g><g clip-path="url(#outb)">
<path d="M1.5 135V137M1.5 164V167M5.5 139V142M5.5 153V158M8.5 115V120M8.5 162V175M12.5 125V139M16.5 92V98M19.5 83V85M23.5 69V82M27.5 68V69M30.5 66V67M30.5 95V116M34.5 77V94M34.5 100V108M37.5 85V93M37.5 97V101M41.5 96V102M41.5 125V133M45.5 111V115M45.5 116V134M48.5 96V119M48.5 205V213M52.5 174V175M52.5 196V204M55.5 163V170M55.5 176V192M59.5 170V172M59.5 184V189M63.5 159V167M63.5 174V184M66.5 141V150M66.5 168V170M73.5 150V154M73.5 175V176M77.5 175V186M84.5 212V227M88.5 205V224M91.5 185V192M95.5 188V189M99.5 208V210M102.5 200V202M106.5 231V237M106.5 245V272M110.5 217V220M110.5 247V254M117.5 246V254M117.5 267V269M120.5 254V257M120.5 267V272M124.5 249V252M124.5 273V278M128.5 222V228M128.5 248V265M131.5 219V224M135.5 218V234M138.5 217V220M138.5 236V247M142.5 209V219M153.5 195V201M153.5 218V223M156.5 199V202M164.5 206V207M164.5 213V225M167.5 209V217M167.5 220V221M171.5 210V221M171.5 248V253M175.5 242V249M175.5 266V272M178.5 284V297M182.5 281V286M182.5 300V304M185.5 286V291M189.5 302V306M189.5 311V323M193.5 293V305M193.5 326V337M196.5 315V332M196.5 333V344M200.5 232V261M203.5 252V256M203.5 273V285M207.5 256V265M207.5 278V279M211.5 254V259M211.5 273V276M214.5 236V243M214.5 258V265M218.5 248V256M218.5 260V264M221.5 244V245M221.5 255V262M225.5 228V230M229.5 209V214M229.5 226V233M236.5 184V186M236.5 187V194M239.5 178V194M239.5 207V213M243.5 199V206M250.5 215V221M254.5 218V229M261.5 231V237M261.5 255V261M265.5 265V269M268.5 228V235M276.5 244V250M279.5 246V250M283.5 290V296M286.5 293V311M286.5 314V317M290.5 291V309M290.5 312V313M294.5 302V305M294.5 317V322M297.5 301V309M301.5 294V300M304.5 294V295M304.5 310V311M308.5 294V301M312.5 296V298M312.5 307V311M315.5 314V340M315.5 347V360M319.5 374V378M322.5 366V377M326.5 323V337M326.5 338V339M330.5 328V329M333.5 327V332M337.5 314V315M337.5 317V331M341.5 343V348M344.5 326V329M344.5 338V345M348.5 324V335M351.5 321V326M355.5 304V306M355.5 320V331M359.5 290V293M362.5 296V302M362.5 321V327M366.5 320V324M366.5 332V333M369.5 329V338M369.5 345V354M373.5 343V362M380.5 338V347M384.5 331V333M387.5 340V353M395.5 320V332M395.5 333V341M402.5 332V338M409.5 325V348M409.5 370V375M413.5 341V344M416.5 357V361M416.5 366V381M420.5 358V365M427.5 341V352M431.5 342V346M434.5 363V367M434.5 407V415M438.5 401V417M442.5 418V425M445.5 402V405M449.5 412V416M452.5 412V422M456.5 353V369M460.5 355V362M460.5 388V393M463.5 408V415M467.5 398V399M474.5 422V437M478.5 402V416M478.5 417V427M481.5 405V409M485.5 398V401M485.5 408V413M492.5 417V423M496.5 406V411M499.5 411V418M503.5 386V395M507.5 385V396M510.5 391V393M514.5 389V397M517.5 423V442M525.5 427V438M525.5 456V464M528.5 457V461M532.5 469V470M535.5 454V459M543.5 436V446M543.5 452V463M546.5 442V452M550.5 410V420M553.5 435V438M557.5 408V412M561.5 386V391M564.5 366V375M564.5 377V384M568.5 384V386M575.5 370V380M582.5 333V341M582.5 345V353M590.5 344V348M593.5 325V339M597.5 345V350M600.5 345V350M604.5 311V318M608.5 337V341M611.5 344V348M615.5 302V307M618.5 300V311M622.5 286V295M622.5 296V297M626.5 287V288M629.5 307V313M640.5 317V327M647.5 340V343M651.5 347V349M651.5 353V355M654.5 348V359M658.5 434V451M662.5 415V423M665.5 415V423M669.5 434V441M669.5 476V522M673.5 447V469M676.5 458V463M676.5 469V481M680.5 435V449M683.5 439V450M687.5 433V445M691.5 447V450M698.5 496V501M701.5 487V501M701.5 503V511M705.5 505V510M712.5 445V447M716.5 446V448M727.5 443V459M738.5 434V447M745.5 409V411M748.5 385V388M756.5 418V422M763.5 412V413M763.5 415V420M766.5 392V395M766.5 406V407M774.5 371V374M774.5 399V403M784.5 397V399M788.5 366V370M792.5 368V384M799.5 416V418M806.5 389V398M806.5 401V411M810.5 383V386M813.5 382V391M824.5 402V407M828.5 376V391M831.5 415V429M835.5 392V408M842.5 399V403M842.5 415V419M853.5 405V410M860.5 400V415M867.5 407V413M871.5 408V412M871.5 414V418M875.5 411V418M878.5 471V477M882.5 446V449M907.5 427V448M911.5 405V416M918.5 353V356M922.5 372V374M925.5 336V343M925.5 367V375M929.5 334V339M932.5 271V286M932.5 323V327M936.5 279V286M936.5 331V333" stroke="#8a8a8a" stroke-width="1" fill="none"/>
<path d="M0 137h3v27h-3zM7 120h3v42h-3zM15 98h3v16h-3zM18 85h3v21h-3zM22 82h3v12h-3zM26 69h3v18h-3zM44 115h3v1h-3zM51 175h3v21h-3zM65 150h3v18h-3zM87 202h3v3h-3zM123 252h3v21h-3zM127 228h3v20h-3zM130 224h3v8h-3zM137 220h3v16h-3zM145 210h3v34h-3zM152 201h3v17h-3zM159 217h3v13h-3zM199 261h3v65h-3zM210 259h3v14h-3zM217 256h3v4h-3zM224 230h3v24h-3zM228 214h3v12h-3zM231 195h3v20h-3zM235 186h3v1h-3zM242 206h3v9h-3zM246 204h3v11h-3zM249 207h3v8h-3zM253 209h3v9h-3zM264 238h3v27h-3zM267 235h3v9h-3zM300 300h3v20h-3zM321 347h3v19h-3zM329 329h3v8h-3zM343 329h3v9h-3zM350 326h3v20h-3zM354 306h3v14h-3zM358 293h3v20h-3zM372 338h3v5h-3zM379 329h3v9h-3zM383 330h3v1h-3zM386 337h3v3h-3zM390 333h3v15h-3zM408 348h3v22h-3zM415 361h3v5h-3zM419 365h3v5h-3zM423 345h3v24h-3zM426 337h3v4h-3zM444 405h3v20h-3zM448 416h3v11h-3zM455 369h3v83h-3zM466 399h3v14h-3zM473 420h3v2h-3zM477 416h3v1h-3zM480 409h3v7h-3zM484 401h3v7h-3zM495 411h3v12h-3zM498 409h3v2h-3zM502 395h3v22h-3zM509 393h3v14h-3zM516 419h3v4h-3zM534 459h3v16h-3zM542 446h3v6h-3zM545 438h3v4h-3zM549 420h3v14h-3zM556 412h3v28h-3zM560 391h3v29h-3zM570 373h3v6h-3zM574 380h3v1h-3zM578 344h3v27h-3zM589 348h3v8h-3zM596 338h3v7h-3zM599 321h3v24h-3zM610 326h3v18h-3zM614 307h3v19h-3zM617 299h3v1h-3zM621 295h3v1h-3zM632 313h3v10h-3zM650 349h3v4h-3zM661 423h3v17h-3zM664 396h3v19h-3zM679 449h3v6h-3zM686 445h3v3h-3zM690 450h3v19h-3zM693 446h3v6h-3zM700 501h3v2h-3zM704 493h3v12h-3zM708 482h3v13h-3zM711 447h3v47h-3zM722 457h3v12h-3zM733 446h3v35h-3zM737 430h3v4h-3zM740 397h3v31h-3zM744 402h3v7h-3zM747 388h3v13h-3zM765 395h3v11h-3zM769 389h3v5h-3zM780 398h3v9h-3zM787 370h3v39h-3zM801 405h3v19h-3zM805 398h3v3h-3zM809 386h3v12h-3zM812 391h3v6h-3zM816 396h3v7h-3zM827 391h3v16h-3zM841 403h3v12h-3zM845 405h3v1h-3zM852 410h3v2h-3zM863 400h3v20h-3zM866 413h3v5h-3zM888 434h3v17h-3zM899 440h3v8h-3zM903 439h3v1h-3zM906 411h3v16h-3zM910 384h3v21h-3zM913 357h3v28h-3zM917 349h3v4h-3zM924 343h3v24h-3zM928 323h3v11h-3zM931 286h3v37h-3z" fill="#a8f4a4"/>
<path d="M1 138h1v25h-1zM8 121h1v40h-1zM16 99h1v14h-1zM19 86h1v19h-1zM23 83h1v10h-1zM27 70h1v16h-1zM52 176h1v19h-1zM66 151h1v16h-1zM88 203h1v1h-1zM124 253h1v19h-1zM128 229h1v18h-1zM131 225h1v6h-1zM138 221h1v14h-1zM146 211h1v32h-1zM153 202h1v15h-1zM160 218h1v11h-1zM200 262h1v63h-1zM211 260h1v12h-1zM218 257h1v2h-1zM225 231h1v22h-1zM229 215h1v10h-1zM232 196h1v18h-1zM243 207h1v7h-1zM247 205h1v9h-1zM250 208h1v6h-1zM254 210h1v7h-1zM265 239h1v25h-1zM268 236h1v7h-1zM301 301h1v18h-1zM322 348h1v17h-1zM330 330h1v6h-1zM344 330h1v7h-1zM351 327h1v18h-1zM355 307h1v12h-1zM359 294h1v18h-1zM373 339h1v3h-1zM380 330h1v7h-1zM387 338h1v1h-1zM391 334h1v13h-1zM409 349h1v20h-1zM416 362h1v3h-1zM420 366h1v3h-1zM424 346h1v22h-1zM427 338h1v2h-1zM445 406h1v18h-1zM449 417h1v9h-1zM456 370h1v81h-1zM467 400h1v12h-1zM481 410h1v5h-1zM485 402h1v5h-1zM496 412h1v10h-1zM503 396h1v20h-1zM510 394h1v12h-1zM517 420h1v2h-1zM535 460h1v14h-1zM543 447h1v4h-1zM546 439h1v2h-1zM550 421h1v12h-1zM557 413h1v26h-1zM561 392h1v27h-1zM571 374h1v4h-1zM579 345h1v25h-1zM590 349h1v6h-1zM597 339h1v5h-1zM600 322h1v22h-1zM611 327h1v16h-1zM615 308h1v17h-1zM633 314h1v8h-1zM651 350h1v2h-1zM662 424h1v15h-1zM665 397h1v17h-1zM680 450h1v4h-1zM687 446h1v1h-1zM691 451h1v17h-1zM694 447h1v4h-1zM705 494h1v10h-1zM709 483h1v11h-1zM712 448h1v45h-1zM723 458h1v10h-1zM734 447h1v33h-1zM738 431h1v2h-1zM741 398h1v29h-1zM745 403h1v5h-1zM748 389h1v11h-1zM766 396h1v9h-1zM770 390h1v3h-1zM781 399h1v7h-1zM788 371h1v37h-1zM802 406h1v17h-1zM806 399h1v1h-1zM810 387h1v10h-1zM813 392h1v4h-1zM817 397h1v5h-1zM828 392h1v14h-1zM842 404h1v10h-1zM864 401h1v18h-1zM867 414h1v3h-1zM889 435h1v15h-1zM900 441h1v6h-1zM907 412h1v14h-1zM911 385h1v19h-1zM914 358h1v26h-1zM918 350h1v2h-1zM925 344h1v22h-1zM929 324h1v9h-1zM932 287h1v35h-1z" fill="#62e05a"/>
<path d="M4 142h3v11h-3zM11 108h3v17h-3zM29 67h3v28h-3zM33 94h3v6h-3zM36 93h3v4h-3zM40 102h3v23h-3zM47 119h3v86h-3zM54 170h3v6h-3zM58 172h3v12h-3zM62 167h3v7h-3zM69 150h3v14h-3zM72 154h3v21h-3zM76 161h3v14h-3zM80 186h3v21h-3zM83 200h3v12h-3zM90 192h3v9h-3zM94 189h3v17h-3zM98 210h3v2h-3zM101 202h3v42h-3zM105 237h3v8h-3zM109 220h3v27h-3zM112 242h3v31h-3zM116 254h3v13h-3zM119 257h3v10h-3zM134 234h3v5h-3zM141 219h3v19h-3zM148 204h3v12h-3zM155 202h3v22h-3zM163 207h3v6h-3zM166 217h3v3h-3zM170 221h3v27h-3zM174 249h3v17h-3zM177 260h3v24h-3zM181 286h3v14h-3zM184 291h3v11h-3zM188 306h3v5h-3zM192 305h3v21h-3zM195 332h3v1h-3zM202 256h3v17h-3zM206 265h3v13h-3zM213 243h3v15h-3zM220 245h3v10h-3zM238 194h3v13h-3zM257 222h3v11h-3zM260 237h3v18h-3zM271 229h3v13h-3zM275 231h3v13h-3zM278 250h3v35h-3zM282 296h3v13h-3zM285 311h3v3h-3zM289 309h3v3h-3zM293 305h3v12h-3zM296 309h3v2h-3zM303 295h3v15h-3zM307 301h3v8h-3zM311 298h3v9h-3zM314 340h3v7h-3zM318 330h3v44h-3zM325 337h3v1h-3zM332 319h3v8h-3zM336 315h3v2h-3zM340 323h3v20h-3zM347 335h3v7h-3zM361 302h3v19h-3zM365 324h3v8h-3zM368 338h3v7h-3zM376 343h3v9h-3zM394 332h3v1h-3zM397 334h3v3h-3zM401 338h3v14h-3zM404 353h3v14h-3zM412 344h3v12h-3zM430 346h3v7h-3zM433 367h3v40h-3zM437 400h3v1h-3zM441 400h3v18h-3zM451 422h3v36h-3zM459 362h3v26h-3zM462 378h3v30h-3zM469 407h3v13h-3zM487 400h3v21h-3zM491 413h3v4h-3zM506 396h3v8h-3zM513 397h3v16h-3zM520 417h3v22h-3zM524 438h3v18h-3zM527 451h3v6h-3zM531 462h3v7h-3zM538 451h3v9h-3zM552 428h3v7h-3zM563 375h3v2h-3zM567 371h3v13h-3zM581 341h3v4h-3zM585 336h3v26h-3zM592 339h3v20h-3zM603 318h3v14h-3zM607 336h3v1h-3zM625 288h3v17h-3zM628 298h3v9h-3zM635 306h3v18h-3zM639 327h3v1h-3zM643 331h3v20h-3zM646 343h3v5h-3zM653 359h3v56h-3zM657 404h3v30h-3zM668 441h3v35h-3zM672 469h3v1h-3zM675 463h3v6h-3zM682 450h3v1h-3zM697 430h3v66h-3zM715 448h3v7h-3zM718 460h3v5h-3zM726 459h3v9h-3zM729 462h3v15h-3zM751 389h3v21h-3zM755 410h3v8h-3zM758 420h3v7h-3zM762 413h3v2h-3zM773 374h3v25h-3zM776 401h3v4h-3zM783 399h3v6h-3zM791 384h3v11h-3zM794 399h3v20h-3zM798 418h3v9h-3zM820 402h3v1h-3zM823 398h3v4h-3zM830 395h3v20h-3zM834 408h3v5h-3zM838 417h3v1h-3zM848 404h3v2h-3zM856 417h3v5h-3zM859 415h3v2h-3zM870 412h3v2h-3zM874 418h3v24h-3zM877 449h3v22h-3zM881 438h3v8h-3zM884 437h3v12h-3zM892 427h3v7h-3zM895 419h3v23h-3zM921 360h3v12h-3zM935 286h3v45h-3z" fill="#f6a6a6"/>
<path d="M5 143h1v9h-1zM12 109h1v15h-1zM30 68h1v26h-1zM34 95h1v4h-1zM37 94h1v2h-1zM41 103h1v21h-1zM48 120h1v84h-1zM55 171h1v4h-1zM59 173h1v10h-1zM63 168h1v5h-1zM70 151h1v12h-1zM73 155h1v19h-1zM77 162h1v12h-1zM81 187h1v19h-1zM84 201h1v10h-1zM91 193h1v7h-1zM95 190h1v15h-1zM102 203h1v40h-1zM106 238h1v6h-1zM110 221h1v25h-1zM113 243h1v29h-1zM117 255h1v11h-1zM120 258h1v8h-1zM135 235h1v3h-1zM142 220h1v17h-1zM149 205h1v10h-1zM156 203h1v20h-1zM164 208h1v4h-1zM167 218h1v1h-1zM171 222h1v25h-1zM175 250h1v15h-1zM178 261h1v22h-1zM182 287h1v12h-1zM185 292h1v9h-1zM189 307h1v3h-1zM193 306h1v19h-1zM203 257h1v15h-1zM207 266h1v11h-1zM214 244h1v13h-1zM221 246h1v8h-1zM239 195h1v11h-1zM258 223h1v9h-1zM261 238h1v16h-1zM272 230h1v11h-1zM276 232h1v11h-1zM279 251h1v33h-1zM283 297h1v11h-1zM286 312h1v1h-1zM290 310h1v1h-1zM294 306h1v10h-1zM304 296h1v13h-1zM308 302h1v6h-1zM312 299h1v7h-1zM315 341h1v5h-1zM319 331h1v42h-1zM333 320h1v6h-1zM341 324h1v18h-1zM348 336h1v5h-1zM362 303h1v17h-1zM366 325h1v6h-1zM369 339h1v5h-1zM377 344h1v7h-1zM398 335h1v1h-1zM402 339h1v12h-1zM405 354h1v12h-1zM413 345h1v10h-1zM431 347h1v5h-1zM434 368h1v38h-1zM442 401h1v16h-1zM452 423h1v34h-1zM460 363h1v24h-1zM463 379h1v28h-1zM470 408h1v11h-1zM488 401h1v19h-1zM492 414h1v2h-1zM507 397h1v6h-1zM514 398h1v14h-1zM521 418h1v20h-1zM525 439h1v16h-1zM528 452h1v4h-1zM532 463h1v5h-1zM539 452h1v7h-1zM553 429h1v5h-1zM568 372h1v11h-1zM582 342h1v2h-1zM586 337h1v24h-1zM593 340h1v18h-1zM604 319h1v12h-1zM626 289h1v15h-1zM629 299h1v7h-1zM636 307h1v16h-1zM644 332h1v18h-1zM647 344h1v3h-1zM654 360h1v54h-1zM658 405h1v28h-1zM669 442h1v33h-1zM676 464h1v4h-1zM698 431h1v64h-1zM716 449h1v5h-1zM719 461h1v3h-1zM727 460h1v7h-1zM730 463h1v13h-1zM752 390h1v19h-1zM756 411h1v6h-1zM759 421h1v5h-1zM774 375h1v23h-1zM777 402h1v2h-1zM784 400h1v4h-1zM792 385h1v9h-1zM795 400h1v18h-1zM799 419h1v7h-1zM824 399h1v2h-1zM831 396h1v18h-1zM835 409h1v3h-1zM857 418h1v3h-1zM875 419h1v22h-1zM878 450h1v20h-1zM882 439h1v6h-1zM885 438h1v10h-1zM893 428h1v5h-1zM896 420h1v21h-1zM922 361h1v10h-1zM936 287h1v43h-1z" fill="#f06a6a"/>
</g>
<polyline points="0.0,199.2 1.8,198.6 5.4,197.3 9.0,195.5 12.6,193.0 16.2,189.8 19.8,185.4 23.4,180.1 27.0,175.1 30.6,170.6 34.3,165.6 37.9,159.4 41.5,152.8 45.1,146.9 48.7,141.5 52.3,136.7 55.9,133.4 59.5,132.9 63.1,132.2 66.7,130.5 70.3,129.9 74.0,131.5 77.6,134.3 81.2,137.9 84.8,142.3 88.4,147.2 92.0,152.6 95.6,158.9 99.2,166.1 102.8,173.3 106.4,180.2 110.0,187.3 113.6,194.9 117.3,201.1 120.9,205.6 124.5,209.4 128.1,212.5 131.7,215.3 135.3,217.9 138.9,221.6 142.5,225.9 146.1,228.7 149.7,230.0 153.3,229.1 157.0,229.7 160.6,230.9 164.2,231.8 167.8,232.6 171.4,233.7 175.0,235.4 178.6,237.3 182.2,239.2 185.8,241.2 189.4,244.1 193.0,247.4 196.7,250.3 200.3,252.9 203.9,254.8 207.5,256.5 211.1,258.3 214.7,260.2 218.3,262.7 221.9,264.4 225.5,265.0 229.1,264.7 232.7,263.2 236.4,261.6 240.0,259.8 243.6,257.8 247.2,255.6 250.8,252.2 254.4,248.1 258.0,244.4 261.6,240.5 265.2,235.8 268.8,232.2 272.4,230.4 276.1,229.6 279.7,230.0 283.3,231.9 286.9,234.7 290.5,238.0 294.1,241.7 297.7,244.9 301.3,247.9 304.9,253.9 308.5,260.2 312.1,265.6 315.8,274.4 319.4,281.1 323.0,289.3 326.6,295.3 330.2,300.1 333.8,304.4 337.4,308.9 341.0,313.4 344.6,318.2 348.2,322.3 351.8,324.7 355.5,324.7 359.1,323.8 362.7,324.1 366.3,325.3 369.9,326.9 373.5,329.3 377.1,331.2 380.7,331.6 384.3,332.5 387.9,331.9 391.5,330.6 395.2,329.9 398.8,330.2 402.4,331.4 406.0,333.0 409.6,334.4 413.2,335.6 416.8,336.5 420.4,337.4 424.0,338.5 427.6,340.2 431.2,343.4 434.8,347.2 438.5,350.8 442.1,354.2 445.7,357.3 449.3,360.5 452.9,366.9 456.5,369.8 460.1,372.3 463.7,376.0 467.3,379.7 470.9,383.4 474.5,386.5 478.2,389.1 481.8,391.9 485.4,395.0 489.0,397.8 492.6,400.8 496.2,404.6 499.8,407.8 503.4,409.2 507.0,409.2 510.6,408.7 514.2,409.0 517.9,409.4 521.5,409.7 525.1,411.0 528.7,414.7 532.3,418.4 535.9,421.7 539.5,424.1 543.1,425.1 546.7,426.4 550.3,427.2 553.9,428.2 557.6,428.0 561.2,426.6 564.8,424.6 568.4,423.2 572.0,421.9 575.6,419.9 579.2,417.3 582.8,414.4 586.4,411.2 590.0,407.4 593.6,402.7 597.3,396.0 600.9,388.9 604.5,383.0 608.1,377.1 611.7,370.8 615.3,364.1 618.9,358.1 622.5,352.1 626.1,346.2 629.7,340.5 633.3,337.2 637.0,334.6 640.6,332.2 644.2,330.5 647.8,329.3 651.4,329.1 655.0,331.5 658.6,335.0 662.2,338.4 665.8,341.0 669.4,347.8 673.0,354.3 676.7,360.0 680.3,365.0 683.9,370.6 687.5,376.9 691.1,384.1 694.7,392.5 698.3,401.1 701.9,410.8 705.5,420.6 709.1,428.1 712.7,435.2 716.4,441.5 720.0,450.9 723.6,454.4 727.2,457.8 730.8,460.5 734.4,461.5 738.0,462.8 741.6,460.2 745.2,456.0 748.8,451.1 752.4,448.8 756.1,447.4 759.7,446.3 763.3,444.5 766.9,441.1 770.5,436.9 774.1,431.8 777.7,427.0 781.3,422.9 784.9,419.3 788.5,416.2 792.1,413.6 795.8,411.5 799.4,408.9 803.0,406.1 806.6,404.2 810.2,402.9 813.8,402.4 817.4,402.3 821.0,401.9 824.6,401.3 828.2,400.5 831.8,400.1 835.4,400.4 839.1,401.0 842.7,401.7 846.3,402.5 849.9,403.0 853.5,403.1 857.1,403.6 860.7,405.3 864.3,406.2 867.9,405.4 871.5,405.5 875.1,407.2 878.8,409.4 882.4,412.2 886.0,415.3 889.6,418.5 893.2,421.2 896.8,423.3 900.4,424.7 904.0,425.3 907.6,425.0 911.2,423.5 914.8,421.9 918.5,420.0 922.1,416.8 925.7,412.3 929.3,406.8 932.9,400.8 936.5,396.8" fill="none" stroke="#6f6592" stroke-width="2.05" stroke-linejoin="round"/>
<polyline points="0.0,296.5 1.8,297.8 5.4,298.4 9.0,301.8 12.6,305.9 16.2,312.2 19.8,322.3 23.4,327.3 27.0,332.8 30.6,333.9 34.3,331.2 37.9,321.9 41.5,310.4 45.1,296.2 48.7,269.4 52.3,244.5 55.9,224.7 59.5,224.1 63.1,220.0 66.7,215.9 70.3,213.9 74.0,217.8 77.6,222.2 81.2,231.3 84.8,242.3 88.4,249.4 92.0,254.4 95.6,257.6 99.2,256.0 102.8,261.3 106.4,265.9 110.0,265.0 113.6,274.6 117.3,276.4 120.9,284.0 124.5,289.6 128.1,292.4 131.7,293.6 135.3,292.8 138.9,288.3 142.5,284.9 146.1,281.8 149.7,278.0 153.3,277.2 157.0,277.4 160.6,276.4 164.2,275.3 167.8,275.2 171.4,276.2 175.0,280.3 178.6,286.1 182.2,294.9 185.8,303.4 189.4,312.1 193.0,323.1 196.7,339.4 200.3,340.2 203.9,342.8 207.5,345.2 211.1,346.3 214.7,346.4 218.3,344.9 221.9,342.6 225.5,339.9 229.1,341.1 232.7,344.8 236.4,348.9 240.0,351.3 243.6,352.7 247.2,352.5 250.8,349.1 254.4,343.3 258.0,336.0 261.6,326.7 265.2,312.4 268.8,291.8 272.4,287.5 276.1,283.7 279.7,286.7 283.3,298.5 286.9,309.8 290.5,319.6 294.1,330.0 297.7,341.6 301.3,349.7 304.9,354.9 308.5,356.8 312.1,358.9 315.8,369.8 319.4,379.7 323.0,386.5 326.6,387.5 330.2,386.9 333.8,388.6 337.4,385.6 341.0,381.9 344.6,373.1 348.2,364.6 351.8,362.0 355.5,362.7 359.1,364.7 362.7,364.1 366.3,364.7 369.9,367.4 373.5,367.3 377.1,369.6 380.7,369.7 384.3,368.6 387.9,366.1 391.5,360.1 395.2,357.8 398.8,358.4 402.4,361.2 406.0,365.2 409.6,368.3 413.2,371.3 416.8,374.2 420.4,376.6 424.0,377.6 427.6,375.4 431.2,369.5 434.8,384.9 438.5,394.3 442.1,404.3 445.7,414.3 449.3,426.6 452.9,442.0 456.5,443.6 460.1,444.3 463.7,447.2 467.3,447.9 470.9,451.7 474.5,455.2 478.2,457.9 481.8,459.5 485.4,459.6 489.0,461.9 492.6,463.5 496.2,459.9 499.8,451.9 503.4,444.8 507.0,444.4 510.6,444.0 514.2,443.5 517.9,445.2 521.5,447.9 525.1,448.4 528.7,452.8 532.3,460.7 535.9,467.8 539.5,472.1 543.1,474.5 546.7,476.3 550.3,476.8 553.9,477.7 557.6,475.7 561.2,478.1 564.8,480.6 568.4,483.1 572.0,485.1 575.6,487.5 579.2,493.1 582.8,498.3 586.4,501.3 590.0,502.3 593.6,499.9 597.3,495.4 600.9,488.8 604.5,479.5 608.1,467.6 611.7,454.5 615.3,445.8 618.9,436.5 622.5,430.0 626.1,416.7 629.7,403.4 633.3,395.3 637.0,388.1 640.6,382.2 644.2,376.8 647.8,370.6 651.4,372.5 655.0,388.3 658.6,406.7 662.2,419.1 665.8,428.9 669.4,450.5 673.0,471.7 676.7,491.1 680.3,504.4 683.9,521.9 687.5,528.3 691.1,533.9 694.7,537.8 698.3,546.8 701.9,553.5 705.5,555.7 709.1,554.4 712.7,545.8 716.4,539.6 720.0,529.0 723.6,514.8 727.2,512.4 730.8,513.1 734.4,510.1 738.0,504.5 741.6,509.0 745.2,514.7 748.8,518.3 752.4,519.6 756.1,519.8 759.7,518.8 763.3,519.1 766.9,520.4 770.5,513.3 774.1,503.6 777.7,493.4 781.3,485.3 784.9,481.3 788.5,479.0 792.1,472.8 795.8,465.7 799.4,457.9 803.0,441.8 806.6,434.9 810.2,431.5 813.8,431.2 817.4,431.4 821.0,431.5 824.6,430.1 828.2,427.9 831.8,426.2 835.4,425.6 839.1,427.5 842.7,428.5 846.3,428.3 849.9,428.7 853.5,430.4 857.1,431.6 860.7,429.9 864.3,428.3 867.9,428.2 871.5,425.6 875.1,431.9 878.8,449.0 882.4,454.8 886.0,457.3 889.6,458.2 893.2,460.1 896.8,462.2 900.4,463.6 904.0,464.4 907.6,464.5 911.2,467.6 914.8,476.4 918.5,483.2 922.1,484.8 925.7,490.2 929.3,497.2 932.9,512.2 936.5,514.6" fill="none" stroke="#2b9fd0" stroke-width="2.1" stroke-linejoin="round"/>
<polyline points="0.0,115.7 1.8,114.4 5.4,110.8 9.0,103.8 12.6,96.4 16.2,88.2 19.8,75.6 23.4,65.7 27.0,53.0 30.6,43.5 34.3,36.0 37.9,30.5 41.5,28.6 45.1,29.6 48.7,38.2 52.3,47.7 55.9,54.3 59.5,56.4 63.1,57.2 66.7,57.7 70.3,57.9 74.0,57.3 77.6,56.2 81.2,54.7 84.8,53.9 88.4,57.4 92.0,63.1 95.6,72.2 99.2,87.5 102.8,98.8 106.4,107.7 110.0,117.1 113.6,127.3 117.3,139.1 120.9,137.6 124.5,140.4 128.1,143.5 131.7,145.7 135.3,151.4 138.9,163.8 142.5,170.6 146.1,179.3 149.7,186.1 153.3,185.8 157.0,186.6 160.6,188.9 164.2,191.3 167.8,194.0 171.4,195.5 175.0,194.1 178.6,191.8 182.2,188.2 185.8,183.4 189.4,179.0 193.0,175.0 196.7,172.3 200.3,174.4 203.9,176.8 207.5,179.0 211.1,181.1 214.7,184.6 218.3,189.2 221.9,194.1 225.5,198.2 229.1,197.1 232.7,191.3 236.4,186.0 240.0,181.9 243.6,177.1 247.2,171.7 250.8,166.8 254.4,164.0 258.0,163.8 261.6,165.6 265.2,170.5 268.8,178.9 272.4,179.5 276.1,181.3 279.7,179.0 283.3,173.6 286.9,168.3 290.5,165.4 294.1,162.6 297.7,161.9 301.3,163.9 304.9,169.3 308.5,177.1 312.1,183.4 315.8,189.4 319.4,194.9 323.0,206.2 326.6,215.2 330.2,222.8 333.8,228.7 337.4,237.2 341.0,248.7 344.6,264.8 348.2,281.7 351.8,288.2 355.5,287.9 359.1,286.3 362.7,287.1 366.3,287.5 369.9,288.4 373.5,293.0 377.1,294.1 380.7,297.5 384.3,299.0 387.9,301.1 391.5,303.0 395.2,303.7 398.8,303.7 402.4,303.1 406.0,301.3 409.6,303.1 413.2,302.8 416.8,301.7 420.4,301.3 424.0,302.3 427.6,307.6 431.2,317.4 434.8,314.4 438.5,310.6 442.1,307.2 445.7,305.4 449.3,303.4 452.9,300.5 456.5,303.1 460.1,307.2 463.7,312.0 467.3,316.7 470.9,321.0 474.5,323.7 478.2,326.5 481.8,331.4 485.4,335.5 489.0,338.9 492.6,343.1 496.2,349.4 499.8,362.5 503.4,375.9 507.0,377.5 510.6,375.8 514.2,375.1 517.9,374.3 521.5,373.7 525.1,374.5 528.7,378.8 532.3,379.2 535.9,378.1 539.5,379.2 543.1,379.0 546.7,380.3 550.3,381.7 553.9,382.5 557.6,383.0 561.2,378.4 564.8,372.6 568.4,367.4 572.0,363.5 575.6,359.4 579.2,349.2 582.8,340.6 586.4,333.4 590.0,327.4 593.6,320.4 597.3,313.3 600.9,307.0 604.5,303.5 608.1,300.8 611.7,298.1 615.3,294.3 618.9,288.4 622.5,284.5 626.1,283.3 629.7,282.9 633.3,282.7 637.0,283.4 640.6,285.1 644.2,288.0 647.8,290.5 651.4,290.3 655.0,280.7 658.6,271.7 662.2,267.4 665.8,264.7 669.4,258.9 673.0,253.9 676.7,251.3 680.3,251.5 683.9,254.1 687.5,259.1 691.1,266.6 694.7,277.3 698.3,290.0 701.9,303.1 705.5,316.0 709.1,329.4 712.7,344.0 716.4,357.4 720.0,375.2 723.6,398.4 727.2,407.4 730.8,412.4 734.4,415.8 738.0,426.2 741.6,414.1 745.2,400.9 748.8,391.4 752.4,386.3 756.1,383.7 759.7,381.9 763.3,378.3 766.9,373.7 770.5,369.8 774.1,369.1 777.7,368.8 781.3,368.2 784.9,365.2 788.5,361.6 792.1,361.4 795.8,362.9 799.4,367.3 803.0,373.5 806.6,375.9 810.2,374.9 813.8,373.7 817.4,373.3 821.0,375.3 824.6,375.8 828.2,375.1 831.8,375.0 835.4,375.2 839.1,375.7 842.7,376.5 846.3,377.2 849.9,376.6 853.5,375.9 857.1,378.0 860.7,384.2 864.3,385.1 867.9,386.3 871.5,386.6 875.1,382.0 878.8,375.8 882.4,376.7 886.0,378.5 889.6,380.3 893.2,382.8 896.8,385.6 900.4,388.3 904.0,389.8 907.6,388.5 911.2,381.0 914.8,366.4 918.5,358.1 922.1,354.5 925.7,342.1 929.3,332.6 932.9,306.6 936.5,299.7" fill="none" stroke="#fccb00" stroke-width="2.05" stroke-linejoin="round"/>
<path d="M741.7 397.5L1172 131.3M741.7 388.3L1172 167.6M741.7 388.3V397.5M669.7 516.5L1172 427.3M669.7 476V521M889.5 451L1010.4 0" stroke="#111" stroke-opacity=".4" stroke-width="2.6" fill="none"/>
<path d="M741.7 397.5L1172 131.3M741.7 388.3L1172 167.6M741.7 388.3V397.5M669.7 516.5L1172 427.3M669.7 476V521M889.5 451L1010.4 0" stroke="#d6d6d6" stroke-width="1.1" fill="none"/>
<text x="1165.5" y="503.8" text-anchor="end" fill="#827d78">10,000</text>
<path d="M1166.5 499.8h4" stroke="#827d78" stroke-width="1.2"/>
<text x="1165.5" y="401.3" text-anchor="end" fill="#827d78">12,000</text>
<path d="M1166.5 397.8h4" stroke="#827d78" stroke-width="1.2"/>
<text x="1165.5" y="314.7" text-anchor="end" fill="#827d78">14,000</text>
<path d="M1166.5 310.8h4" stroke="#827d78" stroke-width="1.2"/>
<text x="1165.5" y="239.7" text-anchor="end" fill="#827d78">16,000</text>
<path d="M1166.5 235.8h4" stroke="#827d78" stroke-width="1.2"/>
<text x="1165.5" y="173.5" text-anchor="end" fill="#827d78">18,000</text>
<path d="M1166.5 169.8h4" stroke="#827d78" stroke-width="1.2"/>
<text x="1165.5" y="114.3" text-anchor="end" fill="#827d78">20,000</text>
<path d="M1166.5 109.8h4" stroke="#827d78" stroke-width="1.2"/>
<text x="1165.5" y="60.7" text-anchor="end" fill="#827d78">22,000</text>
<path d="M1166.5 56.8h4" stroke="#827d78" stroke-width="1.2"/>
<text x="1165.5" y="11.8" text-anchor="end" fill="#827d78">24,000</text>
<path d="M1166.5 7.8h4" stroke="#827d78" stroke-width="1.2"/>
<path d="M1118.6 65.5L1126.4 57.1H1172V73.1H1126.4Z" fill="#333333"/>
<text x="1167.5" y="69.7" text-anchor="end" fill="#ffffff">21,698</text>
<path d="M1118.6 177.5L1126.4 169.1H1172V185.1H1126.4Z" fill="#333333"/>
<text x="1167.5" y="181.7" text-anchor="end" fill="#ffffff">17,783</text>
<path d="M1118.6 285.5L1126.4 277.1H1172V293.1H1126.4Z" fill="#333333"/>
<text x="1167.5" y="289.7" text-anchor="end" fill="#ffffff">14,663</text>
<path d="M1118.6 330.6L1126.4 322.2H1172V338.2H1126.4Z" fill="#cccccc"/>
<text x="1167.5" y="334.8" text-anchor="end" fill="#111111">13,530</text>
<text x="90" y="576.3" fill="#8a8783">Apr</text>
<text x="325" y="576.3" fill="#8a8783">Jul</text>
<text x="563" y="576.3" fill="#8a8783">Okt</text>
<text x="783" y="576.3" fill="#8a8783">Jan '17</text>
<path d="M0 584.4H1172M0 683.8H1172" stroke="#8f8f8f" stroke-width="1.3"/>
<path d="M99.5 581V584M99.5 680V683M99.5 782V785M333.5 581V584M333.5 680V683M333.5 782V785M572.5 581V584M572.5 680V683M572.5 782V785M802.5 581V584M802.5 680V683M802.5 782V785" stroke="#b0b0b0" stroke-width="1"/>
<clipPath id="ca"><rect x="0" y="585" width="1172" height="63.5"/></clipPath>
<clipPath id="cb"><rect x="0" y="648.5" width="1172" height="34.5"/></clipPath>
<polygon points="0.0,648.5 0.0,655.7 1.0,639.3 4.1,639.3 8.2,634.2 11.9,631.7 15.4,618.8 19.5,609.6 23.6,604.5 25.6,595.2 27.2,590.1 28.7,595.2 30.7,604.5 33.8,610.6 36.9,621.9 39.9,629.0 42.0,632.1 45.5,632.5 47.5,644.4 48.7,654.6 51.2,658.3 54.3,655.7 57.3,661.8 59.4,664.9 62.5,662.8 65.5,662.4 69.6,670.0 73.7,675.1 77.8,678.8 82.9,678.8 88.1,677.6 91.7,668.6 93.8,671.0 95.2,672.0 97.3,662.8 99.3,651.6 101.4,663.8 104.4,665.5 109.6,663.8 113.7,671.0 117.1,676.1 119.8,674.1 124.9,666.9 129.0,659.7 132.1,653.6 136.2,655.0 139.3,653.6 142.3,658.3 145.4,653.6 147.5,650.5 149.9,650.1 153.2,639.3 156.7,644.4 160.8,640.3 164.2,636.2 167.9,640.3 172.0,646.4 175.1,651.6 178.2,661.8 182.3,665.3 185.3,662.8 189.4,667.9 192.5,667.3 196.6,675.1 200.3,659.7 202.7,665.3 206.8,661.8 212.0,658.7 215.0,659.1 219.1,656.7 223.2,646.4 227.3,636.2 232.4,626.0 236.5,623.5 240.0,627.0 243.1,623.5 247.8,622.3 250.2,636.2 254.3,634.8 258.4,639.3 261.5,647.5 264.6,644.8 268.7,644.4 272.8,646.8 275.8,651.6 278.9,664.9 283.0,674.1 286.7,677.2 290.2,673.1 293.7,673.5 297.3,672.0 301.0,669.0 304.5,671.0 308.6,665.9 312.7,660.8 314.7,672.0 318.8,677.2 322.3,670.6 326.0,668.6 330.1,658.7 334.2,652.6 337.3,650.1 340.8,655.0 344.0,652.6 347.5,655.2 351.6,654.6 355.7,648.5 359.8,646.4 362.5,652.2 365.9,646.4 369.4,644.4 373.1,646.4 377.6,651.6 381.3,649.5 384.4,650.5 387.9,653.2 391.5,647.5 395.2,650.1 398.7,648.9 402.8,655.7 406.9,660.8 410.0,660.4 414.1,656.7 419.2,654.2 423.3,651.6 427.4,646.4 430.5,652.6 433.5,662.8 438.6,660.8 442.7,663.8 445.8,662.4 448.9,663.2 452.6,666.9 456.1,650.9 459.1,655.7 463.2,658.3 467.7,656.7 472.4,660.4 476.5,662.8 480.0,662.4 482.5,656.7 485.7,648.9 488.6,652.2 492.3,649.5 496.0,650.1 499.5,648.5 501.5,642.3 503.6,639.3 505.6,648.5 507.6,655.2 510.7,650.5 514.8,650.9 517.9,652.6 522.0,653.0 526.1,655.7 530.2,656.7 533.7,658.7 538.4,656.3 542.5,654.6 546.6,653.6 550.7,651.6 553.7,656.3 557.8,651.6 561.9,648.9 564.0,644.0 567.7,643.4 571.1,638.7 575.2,637.2 578.3,631.1 582.0,629.0 586.1,633.1 590.2,630.5 593.0,634.2 597.8,632.1 603.9,631.3 609.0,636.2 613.1,637.2 619.3,633.1 625.8,634.6 629.5,642.3 633.6,643.4 637.3,642.8 641.8,645.4 646.3,650.1 651.0,654.6 655.1,663.8 659.2,666.9 665.3,666.5 669.4,679.2 673.5,680.2 679.7,675.1 686.8,671.0 690.9,670.6 694.6,665.9 698.7,673.5 701.2,673.5 705.3,663.8 709.4,657.7 713.1,653.6 716.5,657.7 718.6,648.5 720.0,647.5 724.1,647.5 727.8,649.5 730.6,653.0 734.3,648.5 738.0,647.5 741.5,640.3 745.0,641.9 748.3,632.5 752.8,635.2 756.5,637.2 759.9,641.3 763.0,644.4 766.7,639.3 770.2,637.6 774.3,640.3 778.4,638.7 781.4,637.2 784.5,642.3 788.6,639.3 792.1,648.5 796.2,652.6 799.5,655.0 801.9,648.5 806.0,646.4 810.5,642.3 814.6,646.4 818.3,650.1 822.0,651.6 825.5,650.5 828.5,647.5 831.0,651.6 834.7,650.1 839.2,657.1 842.9,650.1 849.0,646.0 854.1,650.5 860.3,654.2 864.4,650.5 867.9,652.2 872.6,651.6 875.6,655.7 878.7,662.4 882.8,655.0 885.9,655.0 889.6,652.6 894.1,655.0 899.2,656.1 904.3,654.6 907.4,647.5 911.5,643.4 914.6,641.9 918.2,638.2 922.3,641.9 925.8,632.1 929.9,623.9 932.6,621.5 935.0,624.9 936.7,628.4 936.7,648.5" fill="#a9eeaa" clip-path="url(#ca)"/>
<polygon points="0.0,648.5 0.0,655.7 1.0,639.3 4.1,639.3 8.2,634.2 11.9,631.7 15.4,618.8 19.5,609.6 23.6,604.5 25.6,595.2 27.2,590.1 28.7,595.2 30.7,604.5 33.8,610.6 36.9,621.9 39.9,629.0 42.0,632.1 45.5,632.5 47.5,644.4 48.7,654.6 51.2,658.3 54.3,655.7 57.3,661.8 59.4,664.9 62.5,662.8 65.5,662.4 69.6,670.0 73.7,675.1 77.8,678.8 82.9,678.8 88.1,677.6 91.7,668.6 93.8,671.0 95.2,672.0 97.3,662.8 99.3,651.6 101.4,663.8 104.4,665.5 109.6,663.8 113.7,671.0 117.1,676.1 119.8,674.1 124.9,666.9 129.0,659.7 132.1,653.6 136.2,655.0 139.3,653.6 142.3,658.3 145.4,653.6 147.5,650.5 149.9,650.1 153.2,639.3 156.7,644.4 160.8,640.3 164.2,636.2 167.9,640.3 172.0,646.4 175.1,651.6 178.2,661.8 182.3,665.3 185.3,662.8 189.4,667.9 192.5,667.3 196.6,675.1 200.3,659.7 202.7,665.3 206.8,661.8 212.0,658.7 215.0,659.1 219.1,656.7 223.2,646.4 227.3,636.2 232.4,626.0 236.5,623.5 240.0,627.0 243.1,623.5 247.8,622.3 250.2,636.2 254.3,634.8 258.4,639.3 261.5,647.5 264.6,644.8 268.7,644.4 272.8,646.8 275.8,651.6 278.9,664.9 283.0,674.1 286.7,677.2 290.2,673.1 293.7,673.5 297.3,672.0 301.0,669.0 304.5,671.0 308.6,665.9 312.7,660.8 314.7,672.0 318.8,677.2 322.3,670.6 326.0,668.6 330.1,658.7 334.2,652.6 337.3,650.1 340.8,655.0 344.0,652.6 347.5,655.2 351.6,654.6 355.7,648.5 359.8,646.4 362.5,652.2 365.9,646.4 369.4,644.4 373.1,646.4 377.6,651.6 381.3,649.5 384.4,650.5 387.9,653.2 391.5,647.5 395.2,650.1 398.7,648.9 402.8,655.7 406.9,660.8 410.0,660.4 414.1,656.7 419.2,654.2 423.3,651.6 427.4,646.4 430.5,652.6 433.5,662.8 438.6,660.8 442.7,663.8 445.8,662.4 448.9,663.2 452.6,666.9 456.1,650.9 459.1,655.7 463.2,658.3 467.7,656.7 472.4,660.4 476.5,662.8 480.0,662.4 482.5,656.7 485.7,648.9 488.6,652.2 492.3,649.5 496.0,650.1 499.5,648.5 501.5,642.3 503.6,639.3 505.6,648.5 507.6,655.2 510.7,650.5 514.8,650.9 517.9,652.6 522.0,653.0 526.1,655.7 530.2,656.7 533.7,658.7 538.4,656.3 542.5,654.6 546.6,653.6 550.7,651.6 553.7,656.3 557.8,651.6 561.9,648.9 564.0,644.0 567.7,643.4 571.1,638.7 575.2,637.2 578.3,631.1 582.0,629.0 586.1,633.1 590.2,630.5 593.0,634.2 597.8,632.1 603.9,631.3 609.0,636.2 613.1,637.2 619.3,633.1 625.8,634.6 629.5,642.3 633.6,643.4 637.3,642.8 641.8,645.4 646.3,650.1 651.0,654.6 655.1,663.8 659.2,666.9 665.3,666.5 669.4,679.2 673.5,680.2 679.7,675.1 686.8,671.0 690.9,670.6 694.6,665.9 698.7,673.5 701.2,673.5 705.3,663.8 709.4,657.7 713.1,653.6 716.5,657.7 718.6,648.5 720.0,647.5 724.1,647.5 727.8,649.5 730.6,653.0 734.3,648.5 738.0,647.5 741.5,640.3 745.0,641.9 748.3,632.5 752.8,635.2 756.5,637.2 759.9,641.3 763.0,644.4 766.7,639.3 770.2,637.6 774.3,640.3 778.4,638.7 781.4,637.2 784.5,642.3 788.6,639.3 792.1,648.5 796.2,652.6 799.5,655.0 801.9,648.5 806.0,646.4 810.5,642.3 814.6,646.4 818.3,650.1 822.0,651.6 825.5,650.5 828.5,647.5 831.0,651.6 834.7,650.1 839.2,657.1 842.9,650.1 849.0,646.0 854.1,650.5 860.3,654.2 864.4,650.5 867.9,652.2 872.6,651.6 875.6,655.7 878.7,662.4 882.8,655.0 885.9,655.0 889.6,652.6 894.1,655.0 899.2,656.1 904.3,654.6 907.4,647.5 911.5,643.4 914.6,641.9 918.2,638.2 922.3,641.9 925.8,632.1 929.9,623.9 932.6,621.5 935.0,624.9 936.7,628.4 936.7,648.5" fill="#eeaaaa" clip-path="url(#cb)"/>
<path d="M0 648.5H1172" stroke="#b8b8b8" stroke-width="1" stroke-dasharray="4.2 3.8"/>
<polyline points="0.0,655.7 1.0,639.3 4.1,639.3 8.2,634.2 11.9,631.7 15.4,618.8 19.5,609.6 23.6,604.5 25.6,595.2 27.2,590.1 28.7,595.2 30.7,604.5 33.8,610.6 36.9,621.9 39.9,629.0 42.0,632.1 45.5,632.5 47.5,644.4 48.7,654.6 51.2,658.3 54.3,655.7 57.3,661.8 59.4,664.9 62.5,662.8 65.5,662.4 69.6,670.0 73.7,675.1 77.8,678.8 82.9,678.8 88.1,677.6 91.7,668.6 93.8,671.0 95.2,672.0 97.3,662.8 99.3,651.6 101.4,663.8 104.4,665.5 109.6,663.8 113.7,671.0 117.1,676.1 119.8,674.1 124.9,666.9 129.0,659.7 132.1,653.6 136.2,655.0 139.3,653.6 142.3,658.3 145.4,653.6 147.5,650.5 149.9,650.1 153.2,639.3 156.7,644.4 160.8,640.3 164.2,636.2 167.9,640.3 172.0,646.4 175.1,651.6 178.2,661.8 182.3,665.3 185.3,662.8 189.4,667.9 192.5,667.3 196.6,675.1 200.3,659.7 202.7,665.3 206.8,661.8 212.0,658.7 215.0,659.1 219.1,656.7 223.2,646.4 227.3,636.2 232.4,626.0 236.5,623.5 240.0,627.0 243.1,623.5 247.8,622.3 250.2,636.2 254.3,634.8 258.4,639.3 261.5,647.5 264.6,644.8 268.7,644.4 272.8,646.8 275.8,651.6 278.9,664.9 283.0,674.1 286.7,677.2 290.2,673.1 293.7,673.5 297.3,672.0 301.0,669.0 304.5,671.0 308.6,665.9 312.7,660.8 314.7,672.0 318.8,677.2 322.3,670.6 326.0,668.6 330.1,658.7 334.2,652.6 337.3,650.1 340.8,655.0 344.0,652.6 347.5,655.2 351.6,654.6 355.7,648.5 359.8,646.4 362.5,652.2 365.9,646.4 369.4,644.4 373.1,646.4 377.6,651.6 381.3,649.5 384.4,650.5 387.9,653.2 391.5,647.5 395.2,650.1 398.7,648.9 402.8,655.7 406.9,660.8 410.0,660.4 414.1,656.7 419.2,654.2 423.3,651.6 427.4,646.4 430.5,652.6 433.5,662.8 438.6,660.8 442.7,663.8 445.8,662.4 448.9,663.2 452.6,666.9 456.1,650.9 459.1,655.7 463.2,658.3 467.7,656.7 472.4,660.4 476.5,662.8 480.0,662.4 482.5,656.7 485.7,648.9 488.6,652.2 492.3,649.5 496.0,650.1 499.5,648.5 501.5,642.3 503.6,639.3 505.6,648.5 507.6,655.2 510.7,650.5 514.8,650.9 517.9,652.6 522.0,653.0 526.1,655.7 530.2,656.7 533.7,658.7 538.4,656.3 542.5,654.6 546.6,653.6 550.7,651.6 553.7,656.3 557.8,651.6 561.9,648.9 564.0,644.0 567.7,643.4 571.1,638.7 575.2,637.2 578.3,631.1 582.0,629.0 586.1,633.1 590.2,630.5 593.0,634.2 597.8,632.1 603.9,631.3 609.0,636.2 613.1,637.2 619.3,633.1 625.8,634.6 629.5,642.3 633.6,643.4 637.3,642.8 641.8,645.4 646.3,650.1 651.0,654.6 655.1,663.8 659.2,666.9 665.3,666.5 669.4,679.2 673.5,680.2 679.7,675.1 686.8,671.0 690.9,670.6 694.6,665.9 698.7,673.5 701.2,673.5 705.3,663.8 709.4,657.7 713.1,653.6 716.5,657.7 718.6,648.5 720.0,647.5 724.1,647.5 727.8,649.5 730.6,653.0 734.3,648.5 738.0,647.5 741.5,640.3 745.0,641.9 748.3,632.5 752.8,635.2 756.5,637.2 759.9,641.3 763.0,644.4 766.7,639.3 770.2,637.6 774.3,640.3 778.4,638.7 781.4,637.2 784.5,642.3 788.6,639.3 792.1,648.5 796.2,652.6 799.5,655.0 801.9,648.5 806.0,646.4 810.5,642.3 814.6,646.4 818.3,650.1 822.0,651.6 825.5,650.5 828.5,647.5 831.0,651.6 834.7,650.1 839.2,657.1 842.9,650.1 849.0,646.0 854.1,650.5 860.3,654.2 864.4,650.5 867.9,652.2 872.6,651.6 875.6,655.7 878.7,662.4 882.8,655.0 885.9,655.0 889.6,652.6 894.1,655.0 899.2,656.1 904.3,654.6 907.4,647.5 911.5,643.4 914.6,641.9 918.2,638.2 922.3,641.9 925.8,632.1 929.9,623.9 932.6,621.5 935.0,624.9 936.7,628.4" fill="none" stroke="#fccb00" stroke-width="2" stroke-linejoin="round"/>
<text x="1165.5" y="652.5" text-anchor="end" fill="#827d78">0,000</text>
<path d="M1166.5 648.5h4" stroke="#827d78" stroke-width="1.2"/>
<path d="M0 717.5H1172M0 752.5H1172" stroke="#b8b8b8" stroke-width="1" stroke-dasharray="4.2 3.8"/>
<polyline points="0.0,734.2 2.5,729.0 5.7,731.1 9.2,727.4 12.7,728.0 17.4,723.9 22.5,722.3 27.6,721.2 30.7,727.6 33.8,728.4 37.3,727.4 41.0,733.1 45.5,731.7 48.5,744.4 52.8,739.3 55.7,739.3 59.4,740.3 63.1,739.3 65.9,735.2 69.6,737.2 73.7,739.3 77.4,739.3 81.5,743.4 84.4,744.4 88.5,742.3 92.2,741.3 96.3,742.3 99.9,743.4 103.4,747.5 106.5,748.1 110.6,748.5 114.3,751.6 117.1,750.1 120.4,749.5 124.5,744.8 129.0,739.3 132.1,738.7 135.2,741.3 138.2,737.2 142.3,740.3 146.4,734.2 149.5,735.2 153.6,732.5 156.7,737.8 160.8,736.2 164.9,735.2 167.9,735.8 172.0,740.3 176.1,743.4 180.2,747.5 184.3,749.5 187.4,749.5 192.5,751.6 196.6,753.6 200.3,736.2 203.8,738.7 207.2,739.7 212.0,735.2 218.1,735.2 221.6,734.2 226.3,729.0 230.4,725.5 234.5,721.9 237.1,721.5 240.0,727.6 247.2,727.4 250.2,728.4 253.9,728.4 257.4,734.2 261.5,740.3 265.6,735.2 268.7,735.2 272.8,737.2 276.5,737.4 279.3,745.4 283.4,749.5 290.2,749.5 294.3,750.5 297.3,748.5 301.4,745.0 305.5,746.0 308.6,746.0 312.1,745.0 314.7,751.6 318.8,755.2 321.9,748.5 326.0,745.4 330.1,743.4 333.8,741.9 337.3,739.3 341.4,744.4 344.9,741.3 348.5,743.4 352.2,738.7 355.7,734.2 359.8,732.5 362.9,737.8 369.0,742.3 373.5,739.9 377.6,743.4 380.9,737.2 384.4,738.2 387.9,739.7 392.6,738.2 396.7,738.2 400.8,740.3 406.3,745.0 409.6,740.3 414.1,742.8 419.8,744.4 423.9,737.2 427.4,735.2 431.5,739.3 434.1,749.5 438.2,747.5 442.3,749.5 445.8,746.0 448.9,746.8 452.6,752.2 456.1,735.6 459.1,737.2 463.2,740.3 467.3,739.3 471.0,742.8 474.5,742.3 480.0,740.7 485.1,738.2 489.2,741.3 495.4,739.7 499.5,739.3 503.6,735.2 507.6,737.2 510.7,735.2 514.8,739.3 517.9,740.3 522.0,744.4 525.1,745.8 528.7,746.4 532.2,748.1 535.3,746.4 539.4,746.0 543.5,742.3 547.6,737.8 550.7,734.2 553.3,737.8 556.8,733.1 560.9,729.0 564.4,725.5 568.5,727.6 572.6,725.3 575.8,727.0 579.3,721.9 582.4,721.5 586.5,726.0 590.6,723.3 593.7,727.0 597.8,723.5 600.4,720.8 604.9,723.9 608.6,725.5 612.1,722.9 616.2,719.2 622.3,717.4 626.4,721.5 630.5,722.9 633.6,724.3 637.3,728.4 640.8,730.5 644.9,736.2 647.9,735.2 651.6,736.2 655.7,749.5 658.6,751.6 662.3,748.5 665.3,743.0 669.4,750.9 673.5,750.5 676.6,750.1 680.7,746.4 683.8,746.0 687.9,745.0 691.3,745.0 694.6,744.4 698.7,751.6 702.2,750.5 705.3,748.9 709.0,746.4 712.4,739.3 716.5,740.3 720.0,741.3 723.7,739.9 727.2,742.3 730.6,743.8 734.7,736.2 738.8,733.1 741.5,727.6 745.0,728.4 748.7,726.4 752.8,731.1 756.5,733.1 759.9,735.2 763.4,732.5 767.1,728.0 770.8,727.4 774.3,730.1 777.8,731.5 781.4,730.5 784.5,731.5 788.6,724.5 792.1,731.1 795.8,736.8 799.5,737.6 802.9,733.1 806.4,732.1 810.5,729.0 814.6,731.7 818.7,732.7 823.4,733.7 828.5,731.5 831.6,737.2 835.7,736.2 839.2,737.2 842.5,733.1 846.6,734.2 850.0,734.2 853.5,735.2 857.6,739.7 860.9,737.2 864.4,732.5 867.9,736.2 871.1,736.2 875.2,743.4 878.3,748.1 882.2,741.3 885.5,742.3 889.6,738.2 893.0,738.2 896.5,740.3 900.6,739.3 904.7,739.3 908.0,730.5 911.5,724.3 914.6,720.2 918.2,719.4 922.3,726.0 925.8,721.5 928.9,718.8 932.6,713.7 936.5,725.3" fill="none" stroke="#fccb00" stroke-width="2" stroke-linejoin="round"/>
<text x="1165.5" y="697.5" text-anchor="end" fill="#827d78">100,00</text>
<path d="M1166.5 693.5h4" stroke="#827d78" stroke-width="1.2"/>
<text x="1165.5" y="738.5" text-anchor="end" fill="#827d78">50,00</text>
<path d="M1166.5 734.5h4" stroke="#827d78" stroke-width="1.2"/>
<text x="1165.5" y="779.5" text-anchor="end" fill="#827d78">0,00</text>
<path d="M1166.5 775.5h4" stroke="#827d78" stroke-width="1.2"/>
<rect x="5.3" y="5.1" width="365.7" height="15.9" fill="rgba(36,36,36,0.32)"/>
<rect x="5.3" y="21" width="199.5" height="15.5" fill="rgba(36,36,36,0.32)"/>
<rect x="5.3" y="36.5" width="242.7" height="16.1" fill="rgba(36,36,36,0.32)"/>
<rect x="5.2" y="590" width="109.5" height="15.6" fill="rgba(36,36,36,0.32)"/>
<rect x="5.2" y="690" width="102.8" height="15.8" fill="rgba(36,36,36,0.32)"/>
<g stroke="#d2d2d2" stroke-width="1" fill="#1f1f1f"><path d="M7.4 9.3V17.8M11.5 7.2V17.6M15.5 9.3V17.8" fill="none"/><rect x="6.3" y="9.8" width="2.2" height="3.8"/><rect x="10.4" y="10.9" width="2.2" height="4.4"/><rect x="14.3" y="13.3" width="2.4" height="4.3"/></g>
<text y="17" fill="#d2d2d2"><tspan x="23.4">Canadian Solar Inc.</tspan><tspan x="138">O: 14,663</tspan><tspan x="196.5">H: 14,800</tspan><tspan x="255.7">L: 13,473</tspan><tspan x="312.5">C: 13,530</tspan></text>
<rect x="7" y="28.1" width="10" height="2.9" fill="#fccb00"/>
<text y="33"><tspan x="23.4" fill="#fccb00">BB(20, 2)</tspan><tspan x="81" fill="#fccb00">14,312</tspan><tspan x="125" fill="#6f6592">12,032</tspan><tspan x="168.6" fill="#2b9fd0">9,752</tspan></text>
<g stroke="#d2d2d2" stroke-width="1.2" fill="none"><circle cx="12.5" cy="44.5" r="5"/><path d="M12.5 41.8V44.7L14.6 46.4"/></g>
<text y="49.2" fill="#d2d2d2"><tspan x="23.6" textLength="132.4">22.02.2016 - 22.02.2017</tspan><tspan x="166.6">(1 Jahr, 1 Tag)</tspan></text>
<rect x="7" y="596.8" width="10" height="3" fill="#fccb00"/>
<text y="602" fill="#fccb00"><tspan x="22.8">MOM(14)</tspan><tspan x="78.4">2,563</tspan></text>
<rect x="7" y="696.8" width="10" height="3" fill="#fccb00"/>
<text y="702" fill="#fccb00"><tspan x="23">RSI(14)</tspan><tspan x="71.2">61,19</tspan></text>
</svg>
</body></html>
